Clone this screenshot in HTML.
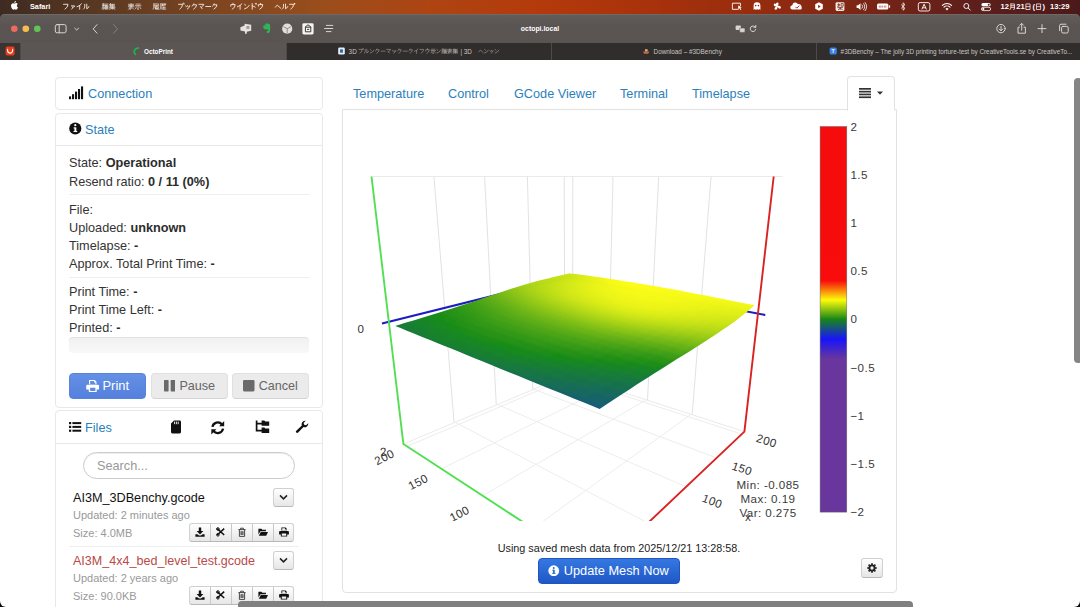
<!DOCTYPE html>
<html lang="en">
<head>
<meta charset="utf-8">
<title>OctoPrint</title>
<style>
*{box-sizing:border-box;margin:0;padding:0}
html,body{width:1080px;height:607px;overflow:hidden;background:#120a08}
body{position:relative;font-family:"Liberation Sans",sans-serif;font-size:12.7px;line-height:18px;color:#333}
.abs{position:absolute}
a,.lnk{color:#2b7fbc;text-decoration:none}
b{font-weight:bold;color:#2c2c2c}
/* ---------- macOS menubar ---------- */
#menubar{position:absolute;left:0;top:0;width:1080px;height:20px;background:linear-gradient(90deg,#3e2b21 0%,#5c3a22 10%,#7d4520 20%,#9a4e1c 30%,#ae4412 40%,#b43a0b 50%,#a8320b 60%,#962c0f 70%,#7a2515 80%,#5e1f1b 90%,#4a1a1a 100%);color:#fff;font-size:7px;line-height:13px;font-weight:bold;white-space:nowrap}
#menubar span{position:absolute;top:0}
/* ---------- safari toolbar ---------- */
#toolbar{position:absolute;left:0;top:13.5px;width:1080px;height:29.5px;background:linear-gradient(#625c5a,#5a5452 40%,#595351);box-shadow:inset 0 0.6px 0 #7d7774;border-top-left-radius:5px;border-top-right-radius:5px}
#tabbar{position:absolute;left:0;top:43px;width:1080px;height:16.6px;background:#302d2c;font-size:6.36px;line-height:17.4px;color:#cbc6c2;white-space:nowrap}
#tabbar .tab{position:absolute;top:0;height:16.6px;border-left:1px solid #4e4a48}
#tabbar .active{background:#5b5553;color:#fff;font-weight:bold}
#tabbar span{position:absolute;top:0}
/* ---------- page ---------- */
#page{position:absolute;left:0;top:59px;width:1080px;height:548px;background:#fff;overflow:hidden;border-radius:0 0 6px 6px}
.panel{position:absolute;border:1px solid #e8e8e8;border-radius:4px;background:#fff}
.phead{position:absolute;left:0;right:0;top:0;height:32px;border-bottom:1px solid #e8e8e8}
.t{position:absolute;white-space:nowrap}
.hr{position:absolute;height:1px;background:#eee}
.btn{position:absolute;border:1px solid #d0d0d0;border-bottom-color:#b9b9b9;border-radius:4px;background:linear-gradient(#ffffff,#e6e6e6);color:#333;text-align:center;white-space:nowrap}
.btn.dis{background:#ebebeb;border-color:#e0e0e0 #e0e0e0 #d4d4d4;color:#666}
.muted{color:#999;font-size:11.2px}
</style>
</head>
<body>
<div id="page"></div><div id="menubar"><svg class="abs" style="left:0;top:0" width="1080" height="13" viewBox="0 0 1080 13"><path fill="#fff" d="M16.2,3.1c-.7.05-1.3.45-1.6.45-.35,0-.85-.43-1.4-.42-.75.01-1.4.43-1.8 1.1-.75 1.3-.2 3.3.55 4.35.36.52.8 1.1 1.35 1.08.54-.02.75-.35 1.4-.35.66 0 .85.35 1.4.34.6-.01.96-.53 1.3-1.05.42-.6.6-1.2.6-1.22-.01-.01-1.15-.45-1.16-1.75-.01-1.1.9-1.62.93-1.65-.5-.75-1.3-.84-1.57-.88zM15.6,2.3c.3-.36.5-.87.44-1.37-.43.02-.95.29-1.26.65-.28.32-.52.83-.45 1.32.48.04.97-.24 1.27-.6z"/><g fill="none" stroke="#fff" stroke-width="0.85" stroke-linecap="round" stroke-linejoin="round" opacity="0.95"><path transform="translate(63.00,3.3) scale(1.0)" d="M0.5,1H5Q5,4 2,5.8"/><path transform="translate(69.75,3.3) scale(1.0)" d="M1.6,2.6H5L4,3.9M3.1,3.6Q3.1,5 1.9,5.9"/><path transform="translate(76.50,3.3) scale(1.0)" d="M5,0.5Q3.5,2.5 0.5,3.5M3.2,2.2V6"/><path transform="translate(83.25,3.3) scale(1.0)" d="M1.5,1V3.5Q1.5,5 0.3,5.8M3.5,0.8V5.5Q5,5 5.8,3.2"/></g><g fill="none" stroke="#fff" stroke-width="0.7" stroke-linecap="round" stroke-linejoin="round" opacity="0.85"><path transform="translate(102.00,3.3) scale(1.0)" d="M0.3,0.8H2.6M0.3,2.2H2.6M1.4,0.2V3M0.4,3.6L0.2,5.8M1.4,3.4V6M2.5,3.6L2.7,5.6M3.2,0.8H6M3.4,2H5.8V6M3.4,2V6M3.4,3.4H5.8M3.4,4.7H5.8M4.6,2V6"/><path transform="translate(109.00,3.3) scale(1.0)" d="M1.5,0.2L0.6,1.6M1.2,1H5.6M1.2,1V3.8M1.2,2H5.4M1.2,2.9H5.4M1.2,3.8H5.8M3.3,1V6M0.3,4.6H6M3.3,4.6L0.6,6M3.3,4.6L5.9,6"/></g><g fill="none" stroke="#fff" stroke-width="0.7" stroke-linecap="round" stroke-linejoin="round" opacity="0.85"><path transform="translate(128.00,3.3) scale(1.0)" d="M0.4,1H5.8M0.8,2.2H5.4M0.3,3.4H6M3.1,0.2V3.4M3,3.4L0.5,6M2,4.4V6M2.2,5.8L3.6,4.8M3.4,3.6L5.8,6"/><path transform="translate(135.00,3.3) scale(1.0)" d="M1,0.8H5.2M0.3,2.4H6M3.1,2.4V6M3.1,5.9L2.4,5.5M1.4,3.6L0.5,5.4M4.8,3.6L5.8,5.4"/></g><g fill="none" stroke="#fff" stroke-width="0.7" stroke-linecap="round" stroke-linejoin="round" opacity="0.85"><path transform="translate(153.00,3.3) scale(1.0)" d="M0.8,0.6H5.6V2H0.8V0.6M0.8,2Q0.8,5 0.2,6M1.8,2.8H5.8M2,3.8H5.4V5H2V3.8M3.6,2.4L2.4,5.2M2.4,5.4L5.8,6M5,5.2L3,6"/><path transform="translate(160.00,3.3) scale(1.0)" d="M0.6,0.6H5.8M0.8,0.6Q0.8,4.5 0.2,6M2,1.4H3.4M2.7,0.9V2.6M1.8,2.2L3.4,2.2M4.2,1.4H5.6M4.9,0.9V2.6M1.8,3.4V5.8H5.8M2.8,4.4H5.4M3.8,3.2V5.8"/></g><g fill="none" stroke="#fff" stroke-width="0.85" stroke-linecap="round" stroke-linejoin="round" opacity="0.95"><path transform="translate(178.00,3.3) scale(1.0)" d="M0.5,1H4.6Q4.6,4 1.8,5.8M5,0L5.4,0.8M5.8,-0.2L6.2,0.6"/><path transform="translate(184.80,3.3) scale(1.0)" d="M1,2.5L1.5,3.5M2.8,2.3L3.2,3.3M5,2.3Q5,4.5 2.5,5.8"/><path transform="translate(191.60,3.3) scale(1.0)" d="M2.2,0.5Q1.8,2 0.4,3M2,1.5H5Q5,4 2,5.8"/><path transform="translate(198.40,3.3) scale(1.0)" d="M0.5,1H5.5Q4.5,3 3,4M2,3.2L3.8,5.5"/><path transform="translate(205.20,3.3) scale(1.0)" d="M0.5,3.2H5.5"/><path transform="translate(212.00,3.3) scale(1.0)" d="M2.2,0.5Q1.8,2 0.4,3M2,1.5H5Q5,4 2,5.8"/></g><g fill="none" stroke="#fff" stroke-width="0.85" stroke-linecap="round" stroke-linejoin="round" opacity="0.95"><path transform="translate(230.00,3.3) scale(1.0)" d="M3,0V1.2M0.8,2.9V1.3H5.2Q5.2,4.5 2.2,5.9"/><path transform="translate(236.90,3.3) scale(1.0)" d="M5,0.5Q3.5,2.5 0.5,3.5M3.2,2.2V6"/><path transform="translate(243.80,3.3) scale(1.0)" d="M0.8,1L2,2M0.8,5.6Q4,5 5.5,2"/><path transform="translate(250.70,3.3) scale(1.0)" d="M1.5,0.3V6M1.5,2.5L4.5,3.8M4.6,0.2L5,1M5.5,0L5.9,0.8"/><path transform="translate(257.60,3.3) scale(1.0)" d="M3,0V1.2M0.8,2.9V1.3H5.2Q5.2,4.5 2.2,5.9"/></g><g fill="none" stroke="#fff" stroke-width="0.85" stroke-linecap="round" stroke-linejoin="round" opacity="0.95"><path transform="translate(275.00,3.3) scale(1.0)" d="M0.3,4L2.2,1.8L5.8,5"/><path transform="translate(282.00,3.3) scale(1.0)" d="M1.5,1V3.5Q1.5,5 0.3,5.8M3.5,0.8V5.5Q5,5 5.8,3.2"/><path transform="translate(289.00,3.3) scale(1.0)" d="M0.5,1H4.6Q4.6,4 1.8,5.8M5.6,0.1a0.5,0.5 0 1,0 0.01,0"/></g><g fill="#fff" stroke="none"><path fill="none" stroke="#fff" stroke-width="0.9" d="M738.5,9.3H732.4V3.2H740.4V6"/><path d="M738.2,5.6l3.6,1.7-1.5.5 1 1.9-.9.4-1-1.9-1.2 1z"/><path d="M753.6,10V5.6a3.4,3.4 0 0 1 6.8,0V10l-1.3-.9-1 .9-1.1-.9-1.1.9-1-.9z"/><circle cx="755.7" cy="5.6" r="0.8" fill="#932b10"/><circle cx="758.4" cy="5.6" r="0.8" fill="#932b10"/><path d="M777,6.3c-1.8-1.4-1.2-3.6.4-3.7 1.4 0 1.6 2 .2 3.4 2.2-.8 3.8.6 3.2 2-.6 1.3-2.4.5-3.3-1.2.3 2.3-1.3 3.6-2.5 2.8-1.2-.9-.2-2.5 1.6-3.1-2.2.2-3.4-1.4-2.6-2.6.8-1.1 2.4-.1 3 2.4z"/><path d="M792.6,9.6a2.2,2.2 0 0 1 -.3-4.4 3,3 0 0 1 5.7-1 2.8,2.8 0 0 1 3.6,2.7 2.3,2.3 0 0 1 -.6,2.7z"/><path fill="none" stroke="#86280f" stroke-width="0.9" d="M795.5,6.9l1.3,1.3 2.4-2.6"/><path d="M819,2.2l3.8,2.1v4.4l-3.8,2.1-3.8-2.1V4.3z"/><path fill="#86280f" d="M818.2,4.8l2.4,1.7-2.4,1.7z"/><rect x="835.6" y="2.2" width="8.8" height="8.8" rx="1.4" fill="#f4ece8"/><path fill="none" stroke="#7a2515" stroke-width="0.75" d="M837.4,4.4H840M838.6,3.4V6.4M837.2,6.4L840,5.6M841,3.6H843.2V6.2M841,3.6V6.2H843.4M837.4,7.6H843M840.2,7V10M838,9.8L840.2,8.4L842.8,9.8"/><path d="M856.6,5.2h1.6l2.3-2v6.8l-2.3-2h-1.6z"/><path fill="none" stroke="#fff" stroke-width="0.8" stroke-linecap="round" d="M862,4.9a2.4,2.4 0 0 1 0,3.4M863.6,3.6a4.3,4.3 0 0 1 0,6M865.1,2.5a6,6 0 0 1 0,8.2"/><rect x="877" y="3.4" width="11.4" height="6.2" rx="1.6"/><rect x="889" y="5.2" width="1.1" height="2.6" rx=".5"/><path fill="none" stroke="#86280f" stroke-width="0.6" d="M879.3,5.6v2M880.8,5.6v2M882.3,5.6v2M884.3,5.6v2M885.8,5.6v2"/><path fill="none" stroke="#fff" stroke-width="0.8" stroke-linejoin="round" d="M901.2,4.6L905,8.4 903.1,10.2V2.8L905,4.6 901.2,8.4"/><rect x="918.3" y="2.6" width="11.6" height="8.4" rx="1.8" fill="none" stroke="#fff" stroke-width="0.9"/><path fill="none" stroke="#fff" stroke-width="0.9" d="M921.8,9.4L924.1,4.2 926.4,9.4M922.6,7.8H925.6"/><path fill="none" stroke="#fff" stroke-width="1.1" stroke-linecap="round" d="M942.4,5.4a6.6,6.6 0 0 1 9.2,0M944,7.2a4.3,4.3 0 0 1 6,0"/><path d="M947,10.4l-1.5-1.6a2.1,2.1 0 0 1 3,0z"/><circle cx="966.3" cy="6" r="2.5" fill="none" stroke="#fff" stroke-width="0.9"/><path stroke="#fff" stroke-width="1" stroke-linecap="round" d="M968.2,8l2,2.1"/><rect x="981.4" y="3" width="9.2" height="3.3" rx="1.65"/><rect x="981.4" y="7.3" width="9.2" height="3.3" rx="1.65" fill="none" stroke="#fff" stroke-width="0.8"/><circle cx="988.7" cy="4.65" r="1" fill="#5e1f1b"/><circle cx="983.3" cy="8.95" r="1.1"/></g><g fill="none" stroke="#fff" stroke-width="0.75" stroke-linecap="round" stroke-linejoin="round" opacity="0.95"><path transform="translate(1009.40,3.4) scale(1.05)" d="M1.4,0.5H4.8V5.4Q4.8,6 4,5.8M1.4,0.5V4Q1.4,5.4 0.5,6M1.4,2.2H4.8M1.4,3.8H4.8"/></g><g fill="none" stroke="#fff" stroke-width="0.75" stroke-linecap="round" stroke-linejoin="round" opacity="0.95"><path transform="translate(1025.00,3.4) scale(1.05)" d="M1.2,0.5H4.8V5.8H1.2ZM1.2,3.1H4.8"/></g><g fill="none" stroke="#fff" stroke-width="0.75" stroke-linecap="round" stroke-linejoin="round" opacity="0.95"><path transform="translate(1035.60,3.4) scale(1.05)" d="M1.2,0.5H4.8V5.8H1.2ZM1.2,3.1H4.8"/></g></svg><span style="left:30px;font-size:7.3px">Safari</span><span style="left:1000.6px;font-size:7.6px">12</span><span style="left:1016.2px;font-size:7.6px">21</span><span style="left:1032.6px;font-size:7.6px">(</span><span style="left:1042.6px;font-size:7.6px">)</span><span style="left:1050px;font-size:7.6px">13:29</span></div><div id="toolbar"></div><svg class="abs" style="left:0;top:13px" width="1080" height="30" viewBox="0 13 1080 30"><circle cx="14.3" cy="28.8" r="3.3" fill="#ec6a5e"/><circle cx="25.8" cy="28.8" r="3.3" fill="#f4bf4f"/><circle cx="37.3" cy="28.8" r="3.3" fill="#61c554"/><g fill="none" stroke="#d8d4d1" stroke-width="1" stroke-linecap="round" stroke-linejoin="round"><rect x="55.3" y="24.6" width="10.8" height="8.2" rx="1.8"/><path d="M59.2,24.6V32.8"/></g><path fill="none" stroke="#d8d4d1" stroke-width="1" stroke-linecap="round" stroke-linejoin="round" stroke-width="1.1" d="M74.8,28.2L76.7,30 78.6,28.2"/><path fill="none" stroke="#d8d4d1" stroke-width="1" stroke-linecap="round" stroke-linejoin="round" stroke-width="1.2" d="M97,24.6L93.2,28.9 97,33.2"/><path fill="none" stroke="#d8d4d1" stroke-width="1" stroke-linecap="round" stroke-linejoin="round" stroke-width="1.2" opacity="0.35" d="M113.6,24.6L117.4,28.9 113.6,33.2"/><path fill="#e6e2df" d="M240.4,27.2l4.2-1.6V23.8l6.6,1v6l-4.4.9v2h-1.8V31.4l-4.6-.9z"/><path fill="#5b5553" d="M246.4,26h3v3h-3z" opacity=".5"/><path fill="#2fb457" d="M263.6,25.6l1.9-1.9c1.2-.3 3.6-.2 4.4.9.5 1.3.6 5.4-.1 7.3-.5 1.3-2.9 1.5-3.2.4-.2-.9.7-1.5 1.5-1.2v-1.6c-2.2.3-4.9-.3-4.9-2.2 0-.7.1-1.2.4-1.7z"/><path fill="#5b5553" d="M265.6,24v1.7h-1.7z" opacity=".7"/><circle cx="287.2" cy="28.7" r="5.1" fill="#e2dedb"/><path fill="none" stroke="#8a8581" stroke-width="0.9" d="M283.4,26.6l3.8,2.1 3.8-2.1M287.2,28.7v4.4"/><rect x="302.4" y="23.2" width="11.2" height="11.2" rx="1.4" fill="#f6f5f4"/><path fill="none" stroke="#3e3a38" stroke-width="1" d="M305.4,27.2h5.4v4.6h-5.4zM305,27.2l3-2.4 3.2,2.4M307,29.4h2.2"/><path fill="none" stroke="#d8d4d1" stroke-width="1" stroke-linecap="round" stroke-linejoin="round" stroke-width="0.9" d="M326.4,25.4h6.4M324.6,28.5h8.2M326.4,31.6h4.6"/><rect x="735.6" y="25.6" width="5.4" height="4.4" rx="1" fill="#d8d4d1"/><rect x="739.6" y="28" width="5.4" height="4.4" rx="1" fill="#d8d4d1" stroke="#5b5553" stroke-width="0.6"/><path fill="none" stroke="#d8d4d1" stroke-width="1" stroke-linecap="round" stroke-linejoin="round" stroke-width="0.9" d="M755.4,27.2a2.8,2.8 0 1 0 .4,2.2M755.8,25.4v1.9h-1.9"/><g fill="none" stroke="#d8d4d1" stroke-width="1" stroke-linecap="round" stroke-linejoin="round" stroke-width="0.95"><circle cx="1001" cy="28.6" r="4.2"/><path d="M1001,26.4v4.2M999.2,29l1.8,1.8 1.8-1.8"/></g><g fill="none" stroke="#d8d4d1" stroke-width="1" stroke-linecap="round" stroke-linejoin="round" stroke-width="0.95"><path d="M1019.4,27.2h-1.4v6h7.4v-6h-1.4M1021.7,30.2V23.6M1019.9,25.2l1.8-1.8 1.8,1.8"/></g><path fill="none" stroke="#d8d4d1" stroke-width="1" stroke-linecap="round" stroke-linejoin="round" stroke-width="1.1" d="M1042,24.6v8M1038,28.6h8"/><g fill="none" stroke="#d8d4d1" stroke-width="1" stroke-linecap="round" stroke-linejoin="round" stroke-width="0.95"><rect x="1061.6" y="26.4" width="6.6" height="6.6" rx="1.4"/><path d="M1059.6,30.6v-5a1.4,1.4 0 0 1 1.4-1.4h5"/></g></svg><div class="abs" style="left:500px;top:13px;width:80px;height:30px;line-height:31px;text-align:center;color:#fff;font-weight:bold;font-size:6.9px">octopi.local</div><div id="tabbar"><div class="tab" style="left:0;width:20px;background:#393331;border-left:none"></div><div class="tab active" style="left:20px;width:266px"></div><div class="tab" style="left:286px;width:265px"></div><div class="tab" style="left:551px;width:265px"></div><div class="tab" style="left:816px;width:264px"></div><svg class="abs" style="left:0;top:0.3px" width="1080" height="16" viewBox="0 43 1080 16"><rect x="5.6" y="46.4" width="9" height="9" rx="1.6" fill="#e63d1c"/><path fill="none" stroke="#fff" stroke-width="1.1" stroke-linecap="round" stroke-linejoin="round" d="M7.6,49.2v1.4a2.5,2.5 0 0 0 5,0V49.2"/><path fill="none" stroke="#22b24c" stroke-width="1.7" stroke-linecap="round" d="M138.4,48.2a3.6,3.6 0 0 0 -3,6.2"/><rect x="338.2" y="47.6" width="6.6" height="6.8" rx="1.2" fill="#e9eef5"/><rect x="340" y="49.2" width="3" height="3.6" rx=".6" fill="#2c6fb7"/><path fill="#c96a3c" d="M643,51.6h6.4l-1.2,2.2h-4.2z"/><path fill="#d9b08c" d="M645,49.2h2.6v2.2H645z"/><rect x="829.6" y="47.4" width="7.2" height="7.2" rx="1.6" fill="#3b82e6"/><path fill="none" stroke="#fff" stroke-width="0.8" d="M831.6,49.6h3.2M833.2,49.6v3.4"/><g fill="none" stroke="#bdb7b3" stroke-width="0.75" stroke-linecap="round" opacity="0.85"><path transform="translate(358.50,48.6) scale(0.8)" d="M0.5,1H4.6Q4.6,4 1.8,5.8M5.6,0.1a0.5,0.5 0 1,0 0.01,0"/><path transform="translate(364.05,48.6) scale(0.8)" d="M1.5,1V3.5Q1.5,5 0.3,5.8M3.5,0.8V5.5Q5,5 5.8,3.2"/><path transform="translate(369.60,48.6) scale(0.8)" d="M0.8,1L2,2M0.8,5.6Q4,5 5.5,2"/><path transform="translate(375.15,48.6) scale(0.8)" d="M2.2,0.5Q1.8,2 0.4,3M2,1.5H5Q5,4 2,5.8"/><path transform="translate(380.70,48.6) scale(0.8)" d="M0.5,3.2H5.5"/><path transform="translate(386.25,48.6) scale(0.8)" d="M0.5,1H5.5Q4.5,3 3,4M2,3.2L3.8,5.5"/><path transform="translate(391.80,48.6) scale(0.8)" d="M1,2.5L1.5,3.5M2.8,2.3L3.2,3.3M5,2.3Q5,4.5 2.5,5.8"/><path transform="translate(397.35,48.6) scale(0.8)" d="M2.2,0.5Q1.8,2 0.4,3M2,1.5H5Q5,4 2,5.8"/><path transform="translate(402.90,48.6) scale(0.8)" d="M0.5,3.2H5.5"/><path transform="translate(408.45,48.6) scale(0.8)" d="M2.2,0.5Q1.8,2 0.4,3M2,1.5H5Q5,4 2,5.8"/><path transform="translate(414.00,48.6) scale(0.8)" d="M5,0.5Q3.5,2.5 0.5,3.5M3.2,2.2V6"/><path transform="translate(419.55,48.6) scale(0.8)" d="M0.5,1H5Q5,4 2,5.8"/><path transform="translate(425.10,48.6) scale(0.8)" d="M3,0V1.2M0.8,2.9V1.3H5.2Q5.2,4.5 2.2,5.9"/><path transform="translate(430.65,48.6) scale(0.8)" d="M1,0.8H5.2M0.3,2.4H6M3.1,2.4V6M3.1,5.9L2.4,5.5M1.4,3.6L0.5,5.4M4.8,3.6L5.8,5.4"/><path transform="translate(436.20,48.6) scale(0.8)" d="M0.8,1L2,2M0.8,5.6Q4,5 5.5,2"/><path transform="translate(441.75,48.6) scale(0.8)" d="M0.3,0.8H2.6M0.3,2.2H2.6M1.4,0.2V3M0.4,3.6L0.2,5.8M1.4,3.4V6M2.5,3.6L2.7,5.6M3.2,0.8H6M3.4,2H5.8V6M3.4,2V6M3.4,3.4H5.8M3.4,4.7H5.8M4.6,2V6"/><path transform="translate(447.30,48.6) scale(0.8)" d="M0.4,1H5.8M0.8,2.2H5.4M0.3,3.4H6M3.1,0.2V3.4M3,3.4L0.5,6M2,4.4V6M2.2,5.8L3.6,4.8M3.4,3.6L5.8,6"/><path transform="translate(452.85,48.6) scale(0.8)" d="M1.5,0.2L0.6,1.6M1.2,1H5.6M1.2,1V3.8M1.2,2H5.4M1.2,2.9H5.4M1.2,3.8H5.8M3.3,1V6M0.3,4.6H6M3.3,4.6L0.6,6M3.3,4.6L5.9,6"/><path transform="translate(478.60,48.6) scale(0.8)" d="M0.3,4L2.2,1.8L5.8,5"/><path transform="translate(483.90,48.6) scale(0.8)" d="M0.8,1L2,2M0.8,5.6Q4,5 5.5,2"/><path transform="translate(489.20,48.6) scale(0.8)" d="M1,2.5L1.5,3.5M2.8,2.3L3.2,3.3M5,2.3Q5,4.5 2.5,5.8"/><path transform="translate(494.50,48.6) scale(0.8)" d="M0.8,1L2,2M0.8,5.6Q4,5 5.5,2"/></g></svg><span style="left:144px;color:#fff;font-weight:bold;font-size:6.35px">OctoPrint</span><span style="left:348.6px">3D</span><span style="left:460.4px">| 3D</span><span style="left:653.6px">Download – #3DBenchy</span><span style="left:840.6px">#3DBenchy – The jolly 3D printing torture-test by CreativeTools.se by CreativeTo...</span></div><div class="panel" style="left:55px;top:77px;width:268px;height:33px"></div><svg class="abs" style="left:68px;top:86px" width="17" height="14" viewBox="0 0 17 14"><g fill="#111"><rect x="1" y="10.4" width="2.1" height="2.8"/><rect x="4" y="8.2" width="2.1" height="5"/><rect x="7" y="5.6" width="2.1" height="7.6"/><rect x="10" y="3" width="2.1" height="10.2"/><rect x="13" y="0.4" width="2.1" height="12.8"/></g></svg><div class="t" style="left:88px;top:85px;"><span class="lnk">Connection</span></div><div class="panel" style="left:55px;top:113px;width:268px;height:294.5px"><div class="phead"></div></div><svg class="abs" style="left:67.6px;top:121.4px" width="15.2" height="15.2" viewBox="0 0 14 14"><circle cx="6.7" cy="6.9" r="5.6" fill="#111"/><rect x="5.9" y="5.9" width="1.8" height="4.1" fill="#fff"/><rect x="5.2" y="5.9" width="1.6" height="1" fill="#fff"/><rect x="5.1" y="9.2" width="3.4" height="1" fill="#fff"/><circle cx="6.7" cy="3.9" r="1.05" fill="#fff"/></svg><div class="t" style="left:85px;top:121px;"><span class="lnk">State</span></div><div class="t" style="left:69px;top:154px;">State: <b>Operational</b></div><div class="t" style="left:69px;top:173px;">Resend ratio: <b>0 / 11 (0%)</b></div><div class="hr" style="left:69px;top:194px;width:240px"></div><div class="t" style="left:69px;top:201px;">File:</div><div class="t" style="left:69px;top:219px;">Uploaded: <b>unknown</b></div><div class="t" style="left:69px;top:237px;">Timelapse: <b>-</b></div><div class="t" style="left:69px;top:255px;">Approx. Total Print Time: <b>-</b></div><div class="hr" style="left:69px;top:276.5px;width:240px"></div><div class="t" style="left:69px;top:283px;">Print Time: <b>-</b></div><div class="t" style="left:69px;top:301px;">Print Time Left: <b>-</b></div><div class="t" style="left:69px;top:319px;">Printed: <b>-</b></div><div class="abs" style="left:69px;top:337px;width:240px;height:16px;border-radius:4px;background:linear-gradient(#f1f1f1,#f8f8f8);box-shadow:inset 0 1px 1px rgba(0,0,0,.07)"></div><div class="btn" style="left:69px;top:373px;width:77px;height:26px;line-height:24px;background:linear-gradient(#6490e6,#5580dc);border-color:#5783dc;color:#fff;font-size:12.9px"><svg style="vertical-align:-1.5px;margin-right:3px" width="13.5" height="12" viewBox="0 0 12 11"><path fill="#fff" d="M2.6,0h5.2l1.6,1.6V4H2.6zM1.2,4.4h9.6a1.2,1.2 0 0 1 1.2,1.2V8.6H9.6V11H2.4V8.6H0V5.6a1.2,1.2 0 0 1 1.2-1.2z"/><path fill="#5d8de0" d="M3.6,1h3.6v1.4h1.2V4H3.6zM3.6,7.2h4.8V10H3.6z"/></svg>Print</div><div class="btn dis" style="left:151px;top:373px;width:77px;height:26px;line-height:24px;font-size:12.6px"><svg style="vertical-align:-1.5px;margin-right:4px" width="11.5" height="11.5" viewBox="0 0 10 10"><rect x="0" y="0" width="4" height="10" rx=".6" fill="#6a6a6a"/><rect x="5.8" y="0" width="4" height="10" rx=".6" fill="#6a6a6a"/></svg>Pause</div><div class="btn dis" style="left:232px;top:373px;width:77px;height:26px;line-height:24px;font-size:12.6px"><svg style="vertical-align:-1.5px;margin-right:4px" width="11.5" height="11.5" viewBox="0 0 10 10"><rect x="0" y="0" width="10" height="10" rx="1" fill="#6a6a6a"/></svg>Cancel</div><div class="panel" style="left:55px;top:410px;width:268px;height:230px"><div class="phead" style="height:33px"></div></div><svg class="abs" style="left:68px;top:421px" width="14" height="12" viewBox="0 0 14 12"><g fill="#111"><rect x="1" y="1" width="2.2" height="2.2"/><rect x="4.4" y="1.1" width="8.8" height="2"/><rect x="1" y="4.8" width="2.2" height="2.2"/><rect x="4.4" y="4.9" width="8.8" height="2"/><rect x="1" y="8.6" width="2.2" height="2.2"/><rect x="4.4" y="8.7" width="8.8" height="2"/></g></svg><div class="t" style="left:85px;top:419px;"><span class="lnk">Files</span></div><svg class="abs" style="left:170px;top:420px" width="12" height="14" viewBox="0 0 12 14"><path fill="#111" d="M4,0.6h5.6a1.4,1.4 0 0 1 1.4,1.4v10a1.4,1.4 0 0 1 -1.4,1.4H2.4a1.4,1.4 0 0 1 -1.4-1.4V3.6z"/><path stroke="#fff" stroke-width="0.9" d="M4.6,1.6v2.6M6.4,1.6v2.6M8.2,1.6v2.6"/></svg><svg class="abs" style="left:209.5px;top:419.5px" width="15.5" height="15.5" viewBox="0 0 14 14"><g fill="none" stroke="#111" stroke-width="2.1"><path d="M2.2,6.2a4.9,4.9 0 0 1 8.6-2.2"/><path d="M11.8,7.8a4.9,4.9 0 0 1 -8.6,2.2"/></g><path fill="#111" d="M12.8,1v4.6H8.2zM1.2,13V8.4h4.6z"/></svg><svg class="abs" style="left:255px;top:420px" width="15" height="14" viewBox="0 0 15 14"><path fill="none" stroke="#111" stroke-width="1.7" d="M1.6,0.6V10.6H7M1.6,3.6H7"/><path fill="#111" d="M6.6,0.6h2.8l.8.9h4v4.3H6.6zM6.6,7.6h2.8l.8.9h4v4.4H6.6z"/></svg><svg class="abs" style="left:295px;top:420px" width="14" height="14" viewBox="0 0 14 14"><path fill="#111" d="M13.2,3.2a3.6,3.6 0 0 1 -4.7,3.9L3.2,12.6a1.3,1.3 0 0 1 -1.9-1.9L6.8,5.4A3.6,3.6 0 0 1 10.7,.7L8.6,2.9l.6,1.8 1.8.6z"/></svg><div class="abs" style="left:83px;top:452px;width:212px;height:27px;border:1px solid #ccc;border-radius:14px;box-shadow:inset 0 1px 1px rgba(0,0,0,.075)"></div><div class="t" style="left:97px;top:457px;color:#999">Search...</div><div class="t" style="left:73px;top:488.5px;color:#111;font-size:12.65px">AI3M_3DBenchy.gcode</div><div class="btn" style="left:273px;top:487.5px;width:21px;height:19px;border-radius:3px"></div><svg class="abs" style="left:279px;top:493.5px" width="9" height="7" viewBox="0 0 9 7"><path fill="none" stroke="#222" stroke-width="1.5" d="M1,1.4L4.5,4.9 8,1.4"/></svg><div class="t" style="left:73px;top:505.5px;color:#999;font-size:11px">Updated: 2 minutes ago</div><div class="t" style="left:73px;top:523.5px;color:#999;font-size:11px">Size: 4.0MB</div><div class="btn" style="left:189px;top:522.5px;width:105px;height:19px;border-radius:3px"></div><div class="abs" style="left:210px;top:523.5px;width:1px;height:17px;background:#c8c8c8"></div><div class="abs" style="left:231px;top:523.5px;width:1px;height:17px;background:#c8c8c8"></div><div class="abs" style="left:252px;top:523.5px;width:1px;height:17px;background:#c8c8c8"></div><div class="abs" style="left:273px;top:523.5px;width:1px;height:17px;background:#c8c8c8"></div><svg class="abs" style="left:194.5px;top:527.0px" width="10" height="10" viewBox="0 0 10 10"><path fill="#111" d="M3.8,0.5h2.4v3.6h2.2L5,7.6 1.6,4.1h2.2zM0.4,7.2h2l1.6,1.4h2l1.6-1.4h2v2.6H0.4z"/></svg><svg class="abs" style="left:215.5px;top:527.0px" width="10" height="10" viewBox="0 0 10 10"><path fill="none" stroke="#111" stroke-width="1.5" d="M1.2,1.6L8.2,8M8.2,1.6L1.2,8"/><circle cx="1.9" cy="2" r="1.3" fill="none" stroke="#111" stroke-width="1"/><circle cx="1.9" cy="7.8" r="1.3" fill="none" stroke="#111" stroke-width="1"/></svg><svg class="abs" style="left:236.5px;top:527.0px" width="10" height="10" viewBox="0 0 10 10"><path fill="none" stroke="#333" stroke-width="0.9" d="M1.4,2.6h7.2M3.6,2.4V1.2h2.8v1.2M2.4,2.8V9.4h5.2V2.8M4,4.2v3.8M5,4.2v3.8M6,4.2v3.8"/></svg><svg class="abs" style="left:257.5px;top:527.0px" width="10" height="10" viewBox="0 0 10 10"><path fill="#111" d="M0.4,1.8h3l.9.9h3.6v1.5H2.4L0.4,7.6zM2.8,5h7.2L8.2,8.8H0.8z"/></svg><svg class="abs" style="left:278.5px;top:527.0px" width="10" height="10" viewBox="0 0 10 10"><path fill="#111" d="M2.4,0.4h4.2l1,1V3.6H2.4zM1,3.9h8a.9,.9 0 0 1 .9.9V7.6H8.2V9.6H1.8V7.6H0.1V4.8a.9,.9 0 0 1 .9-.9z"/><path fill="#f2f2f2" d="M3.2,1.2h2.8v1h.8v1.4H3.2zM2.8,6.4h4.4V8.8H2.8z"/></svg><div class="hr" style="left:69px;top:546px;width:230px"></div><div class="t" style="left:73px;top:552px;color:#b94a48;font-size:12.55px">AI3M_4x4_bed_level_test.gcode</div><div class="btn" style="left:273px;top:551px;width:21px;height:19px;border-radius:3px"></div><svg class="abs" style="left:279px;top:557px" width="9" height="7" viewBox="0 0 9 7"><path fill="none" stroke="#222" stroke-width="1.5" d="M1,1.4L4.5,4.9 8,1.4"/></svg><div class="t" style="left:73px;top:569px;color:#999;font-size:11px">Updated: 2 years ago</div><div class="t" style="left:73px;top:587px;color:#999;font-size:11px">Size: 90.0KB</div><div class="btn" style="left:189px;top:585.5px;width:105px;height:19px;border-radius:3px"></div><div class="abs" style="left:210px;top:586.5px;width:1px;height:17px;background:#c8c8c8"></div><div class="abs" style="left:231px;top:586.5px;width:1px;height:17px;background:#c8c8c8"></div><div class="abs" style="left:252px;top:586.5px;width:1px;height:17px;background:#c8c8c8"></div><div class="abs" style="left:273px;top:586.5px;width:1px;height:17px;background:#c8c8c8"></div><svg class="abs" style="left:194.5px;top:590.0px" width="10" height="10" viewBox="0 0 10 10"><path fill="#111" d="M3.8,0.5h2.4v3.6h2.2L5,7.6 1.6,4.1h2.2zM0.4,7.2h2l1.6,1.4h2l1.6-1.4h2v2.6H0.4z"/></svg><svg class="abs" style="left:215.5px;top:590.0px" width="10" height="10" viewBox="0 0 10 10"><path fill="none" stroke="#111" stroke-width="1.5" d="M1.2,1.6L8.2,8M8.2,1.6L1.2,8"/><circle cx="1.9" cy="2" r="1.3" fill="none" stroke="#111" stroke-width="1"/><circle cx="1.9" cy="7.8" r="1.3" fill="none" stroke="#111" stroke-width="1"/></svg><svg class="abs" style="left:236.5px;top:590.0px" width="10" height="10" viewBox="0 0 10 10"><path fill="none" stroke="#333" stroke-width="0.9" d="M1.4,2.6h7.2M3.6,2.4V1.2h2.8v1.2M2.4,2.8V9.4h5.2V2.8M4,4.2v3.8M5,4.2v3.8M6,4.2v3.8"/></svg><svg class="abs" style="left:257.5px;top:590.0px" width="10" height="10" viewBox="0 0 10 10"><path fill="#111" d="M0.4,1.8h3l.9.9h3.6v1.5H2.4L0.4,7.6zM2.8,5h7.2L8.2,8.8H0.8z"/></svg><svg class="abs" style="left:278.5px;top:590.0px" width="10" height="10" viewBox="0 0 10 10"><path fill="#111" d="M2.4,0.4h4.2l1,1V3.6H2.4zM1,3.9h8a.9,.9 0 0 1 .9.9V7.6H8.2V9.6H1.8V7.6H0.1V4.8a.9,.9 0 0 1 .9-.9z"/><path fill="#f2f2f2" d="M3.2,1.2h2.8v1h.8v1.4H3.2zM2.8,6.4h4.4V8.8H2.8z"/></svg><div class="abs" style="left:342px;top:109px;width:555px;height:484px;border:1px solid #e2e2e2;border-radius:0 0 4px 4px"></div><div class="t" style="left:353px;top:85px;"><span class="lnk">Temperature</span></div><div class="t" style="left:448px;top:85px;"><span class="lnk">Control</span></div><div class="t" style="left:514px;top:85px;"><span class="lnk">GCode Viewer</span></div><div class="t" style="left:620px;top:85px;"><span class="lnk">Terminal</span></div><div class="t" style="left:692px;top:85px;"><span class="lnk">Timelapse</span></div><div class="abs" style="left:847px;top:76px;width:48px;height:35px;border:1px solid #e2e2e2;border-bottom:1px solid #fff;border-radius:4px 4px 0 0;background:#fff"></div><svg class="abs" style="left:858px;top:87px" width="28" height="12" viewBox="0 0 28 12"><g fill="#333"><rect x="1" y="1" width="12" height="1.7"/><rect x="1" y="3.8" width="12" height="1.7"/><rect x="1" y="6.6" width="12" height="1.7"/><rect x="1" y="9.4" width="12" height="1.7"/><path d="M19,4.4h6l-3,3.4z"/></g></svg><div class="t" style="left:419px;top:540px;width:400px;text-align:center;font-size:10.8px;line-height:16px;color:#222">Using saved mesh data from 2025/12/21 13:28:58.</div><div class="btn" style="left:537.5px;top:557.5px;width:142px;height:26.5px;line-height:24.5px;background:linear-gradient(#3578e2,#1f58c6);border-color:#1f55bd;color:#fff;font-size:12.75px;border-radius:4px"><svg style="vertical-align:-1.5px;margin-right:4px" width="11.5" height="11.5" viewBox="0 0 14 14"><circle cx="7" cy="7" r="6.6" fill="#fff"/><rect x="6" y="5.8" width="2.2" height="4.6" fill="#2a6ed8"/><rect x="5.1" y="5.8" width="2" height="1.1" fill="#2a6ed8"/><rect x="5" y="9.6" width="4.2" height="1.1" fill="#2a6ed8"/><circle cx="7" cy="3.6" r="1.25" fill="#2a6ed8"/></svg>Update Mesh Now</div><div class="btn" style="left:861px;top:558px;width:22px;height:20px;border-radius:3px"></div><svg class="abs" style="left:867px;top:563px" width="10" height="10" viewBox="0 0 10 10"><circle cx="5" cy="5" r="2.6" fill="none" stroke="#222" stroke-width="1.9"/><g stroke="#222" stroke-width="1.7"><path d="M5,0.2V2M5,8V9.8M0.2,5H2M8,5H9.8M1.6,1.6L2.9,2.9M7.1,7.1L8.4,8.4M8.4,1.6L7.1,2.9M2.9,7.1L1.6,8.4"/></g></svg><div class="abs" style="left:238px;top:601px;width:675px;height:10px;border-radius:4px;background:#808080"></div><div class="abs" style="left:1074px;top:77.5px;width:8px;height:285px;border-radius:4px;background:#858585"></div><svg class="abs" style="left:343px;top:110px" width="553" height="411" viewBox="343 110 553 410.6"><path d="M454.1,422.5L433.9,176.3M692.2,414.5L711.1,176.3M496.3,404.8L484.6,176.3M647.5,400.1L658.7,176.3M532.8,389.5L527.4,176.3M607.9,387.3L613.0,176.3M564.9,376.0L564.2,176.3M572.5,375.8L572.8,176.3" fill="none" stroke="#d6d6d6" stroke-width="0.7"/><path d="M371.5,176.3L568.3,176.3M568.3,176.3L782.5,176.3M403.4,443.8L568.5,374.5M568.5,374.5L744.4,431.4" fill="none" stroke="#e4e4e4" stroke-width="0.8"/><path d="M648.0,522.8L455.1,422.1M533.0,528.3L691.1,414.1M686.1,486.6L497.5,404.3M482.7,495.5L646.2,399.6M716.6,457.7L533.7,389.1M441.5,468.7L607.0,387.0M741.7,434.0L565.0,376.0M407.1,446.2L572.4,375.8" fill="none" stroke="#ededed" stroke-width="1"/><path d="M382,323.2L568.3,276.9L765.3,314.8" fill="none" stroke="#1c1cc4" stroke-width="2.1"/><defs><clipPath id="sc"><polygon points="599.6,408.8 610.1,401.8 620.0,395.3 629.4,389.2 638.3,383.4 646.8,378.0 654.9,372.8 662.6,368.0 670.0,363.3 677.0,358.9 683.7,354.7 690.2,350.7 696.4,346.8 702.3,343.0 708.0,339.4 713.5,335.8 718.7,332.4 723.8,328.9 728.7,325.5 733.4,322.2 737.9,318.8 742.3,315.4 746.5,312.0 750.6,308.6 754.5,305.1 744.2,303.0 734.2,301.0 724.5,299.0 715.0,297.2 705.9,295.4 696.9,293.7 688.2,292.0 679.8,290.4 671.5,288.9 663.5,287.5 655.7,286.1 648.1,284.8 640.6,283.5 633.4,282.3 626.3,281.2 619.4,280.1 612.7,279.0 606.1,278.0 599.6,277.1 593.4,276.2 587.2,275.3 581.2,274.5 575.3,273.7 569.6,273.0 564.4,274.2 559.1,275.5 553.6,276.8 548.0,278.2 542.3,279.6 536.4,281.1 530.3,282.8 524.1,284.6 517.7,286.5 511.2,288.6 504.4,290.8 497.5,293.2 490.3,295.6 482.9,298.1 475.3,300.7 467.5,303.3 459.5,305.9 451.2,308.6 442.6,311.3 433.7,314.0 424.6,316.8 415.1,319.7 405.3,322.6 395.2,325.7 400.6,327.9 406.2,330.2 412.0,332.5 418.0,335.0 424.2,337.5 430.6,340.1 437.2,342.8 444.0,345.5 451.1,348.4 458.5,351.4 466.1,354.5 474.0,357.7 482.3,361.1 490.8,364.6 499.7,368.2 509.0,372.0 518.6,375.9 528.7,380.0 539.2,384.3 550.2,388.7 561.7,393.4 573.7,398.3 586.4,403.4"/></clipPath><filter id="sb" x="-5%" y="-5%" width="110%" height="110%"><feGaussianBlur stdDeviation="1.6"/></filter></defs><g clip-path="url(#sc)"><g filter="url(#sb)" stroke-width="0.9" stroke-linejoin="round"><polygon points="604.8,432.2 616.7,423.4 601.4,417.0 589.4,425.4" fill="#185a7a" stroke="#185a7a"/><polygon points="589.4,425.4 601.4,417.0 587.0,411.0 574.9,418.9" fill="#185a7a" stroke="#185a7a"/><polygon points="574.9,418.9 587.0,411.0 573.3,405.2 561.1,412.8" fill="#185d74" stroke="#185d74"/><polygon points="561.1,412.8 573.3,405.2 560.3,399.8 548.1,407.0" fill="#18616d" stroke="#18616d"/><polygon points="548.1,407.0 560.3,399.8 547.9,394.6 535.6,401.4" fill="#186466" stroke="#186466"/><polygon points="535.6,401.4 547.9,394.6 536.2,389.6 523.8,396.2" fill="#18685f" stroke="#18685f"/><polygon points="523.8,396.2 536.2,389.6 524.9,384.9 512.6,391.2" fill="#186b58" stroke="#186b58"/><polygon points="512.6,391.2 524.9,384.9 514.2,380.4 501.9,386.4" fill="#186e52" stroke="#186e52"/><polygon points="501.9,386.4 514.2,380.4 503.9,376.1 491.6,381.8" fill="#18714d" stroke="#18714d"/><polygon points="491.6,381.8 503.9,376.1 494.1,372.0 481.8,377.5" fill="#187348" stroke="#187348"/><polygon points="481.8,377.5 494.1,372.0 484.7,368.0 472.5,373.3" fill="#187544" stroke="#187544"/><polygon points="472.5,373.3 484.7,368.0 475.7,364.2 463.5,369.3" fill="#187741" stroke="#187741"/><polygon points="463.5,369.3 475.7,364.2 467.1,360.6 454.9,365.5" fill="#18783e" stroke="#18783e"/><polygon points="454.9,365.5 467.1,360.6 458.8,357.1 446.7,361.8" fill="#187a3b" stroke="#187a3b"/><polygon points="446.7,361.8 458.8,357.1 450.8,353.7 438.8,358.3" fill="#187b39" stroke="#187b39"/><polygon points="438.8,358.3 450.8,353.7 443.1,350.5 431.2,354.9" fill="#187b37" stroke="#187b37"/><polygon points="431.2,354.9 443.1,350.5 435.7,347.4 423.9,351.7" fill="#187c36" stroke="#187c36"/><polygon points="423.9,351.7 435.7,347.4 428.6,344.4 416.8,348.6" fill="#187c35" stroke="#187c35"/><polygon points="416.8,348.6 428.6,344.4 421.8,341.6 410.0,345.5" fill="#187d35" stroke="#187d35"/><polygon points="410.0,345.5 421.8,341.6 415.2,338.8 403.5,342.6" fill="#187c36" stroke="#187c36"/><polygon points="403.5,342.6 415.2,338.8 408.8,336.1 397.2,339.8" fill="#187c37" stroke="#187c37"/><polygon points="397.2,339.8 408.8,336.1 402.6,333.5 391.1,337.1" fill="#187b38" stroke="#187b38"/><polygon points="391.1,337.1 402.6,333.5 396.7,331.0 385.3,334.5" fill="#187b39" stroke="#187b39"/><polygon points="385.3,334.5 396.7,331.0 390.9,328.6 379.6,332.0" fill="#187a3a" stroke="#187a3a"/><polygon points="379.6,332.0 390.9,328.6 385.4,326.2 374.1,329.5" fill="#187a3a" stroke="#187a3a"/><polygon points="374.1,329.5 385.4,326.2 380.0,324.0 368.8,327.2" fill="#187a3a" stroke="#187a3a"/><polygon points="616.7,423.4 627.8,415.2 612.7,409.2 601.4,417.0" fill="#185a7a" stroke="#185a7a"/><polygon points="601.4,417.0 612.7,409.2 598.4,403.5 587.0,411.0" fill="#185a7a" stroke="#185a7a"/><polygon points="587.0,411.0 598.4,403.5 584.8,398.1 573.3,405.2" fill="#185d74" stroke="#185d74"/><polygon points="573.3,405.2 584.8,398.1 571.9,393.0 560.3,399.8" fill="#18616d" stroke="#18616d"/><polygon points="560.3,399.8 571.9,393.0 559.6,388.1 547.9,394.6" fill="#186466" stroke="#186466"/><polygon points="547.9,394.6 559.6,388.1 547.8,383.4 536.2,389.6" fill="#18685f" stroke="#18685f"/><polygon points="536.2,389.6 547.8,383.4 536.6,378.9 524.9,384.9" fill="#186b58" stroke="#186b58"/><polygon points="524.9,384.9 536.6,378.9 525.9,374.7 514.2,380.4" fill="#186e52" stroke="#186e52"/><polygon points="514.2,380.4 525.9,374.7 515.6,370.6 503.9,376.1" fill="#18714d" stroke="#18714d"/><polygon points="503.9,376.1 515.6,370.6 505.8,366.7 494.1,372.0" fill="#187348" stroke="#187348"/><polygon points="494.1,372.0 505.8,366.7 496.4,362.9 484.7,368.0" fill="#187544" stroke="#187544"/><polygon points="484.7,368.0 496.4,362.9 487.3,359.3 475.7,364.2" fill="#187741" stroke="#187741"/><polygon points="475.7,364.2 487.3,359.3 478.6,355.9 467.1,360.6" fill="#18783e" stroke="#18783e"/><polygon points="467.1,360.6 478.6,355.9 470.3,352.6 458.8,357.1" fill="#187a3b" stroke="#187a3b"/><polygon points="458.8,357.1 470.3,352.6 462.3,349.4 450.8,353.7" fill="#187b39" stroke="#187b39"/><polygon points="450.8,353.7 462.3,349.4 454.6,346.3 443.1,350.5" fill="#187b37" stroke="#187b37"/><polygon points="443.1,350.5 454.6,346.3 447.1,343.3 435.7,347.4" fill="#187c36" stroke="#187c36"/><polygon points="435.7,347.4 447.1,343.3 439.9,340.5 428.6,344.4" fill="#187c35" stroke="#187c35"/><polygon points="428.6,344.4 439.9,340.5 433.0,337.7 421.8,341.6" fill="#187d35" stroke="#187d35"/><polygon points="421.8,341.6 433.0,337.7 426.4,335.1 415.2,338.8" fill="#187c36" stroke="#187c36"/><polygon points="415.2,338.8 426.4,335.1 419.9,332.5 408.8,336.1" fill="#187c37" stroke="#187c37"/><polygon points="408.8,336.1 419.9,332.5 413.7,330.0 402.6,333.5" fill="#187b38" stroke="#187b38"/><polygon points="402.6,333.5 413.7,330.0 407.7,327.6 396.7,331.0" fill="#187b39" stroke="#187b39"/><polygon points="396.7,331.0 407.7,327.6 401.8,325.3 390.9,328.6" fill="#187a3a" stroke="#187a3a"/><polygon points="390.9,328.6 401.8,325.3 396.2,323.0 385.4,326.2" fill="#187a3a" stroke="#187a3a"/><polygon points="385.4,326.2 396.2,323.0 390.7,320.9 380.0,324.0" fill="#187a3a" stroke="#187a3a"/><polygon points="627.8,415.2 638.3,407.5 623.4,401.9 612.7,409.2" fill="#18616d" stroke="#18616d"/><polygon points="612.7,409.2 623.4,401.9 609.2,396.5 598.4,403.5" fill="#18616d" stroke="#18616d"/><polygon points="598.4,403.5 609.2,396.5 595.7,391.4 584.8,398.1" fill="#186367" stroke="#186367"/><polygon points="584.8,398.1 595.7,391.4 582.9,386.6 571.9,393.0" fill="#186760" stroke="#186760"/><polygon points="571.9,393.0 582.9,386.6 570.6,382.0 559.6,388.1" fill="#186a59" stroke="#186a59"/><polygon points="559.6,388.1 570.6,382.0 558.9,377.5 547.8,383.4" fill="#186e52" stroke="#186e52"/><polygon points="547.8,383.4 558.9,377.5 547.7,373.3 536.6,378.9" fill="#18714c" stroke="#18714c"/><polygon points="536.6,378.9 547.7,373.3 537.0,369.2 525.9,374.7" fill="#187446" stroke="#187446"/><polygon points="525.9,374.7 537.0,369.2 526.8,365.4 515.6,370.6" fill="#187740" stroke="#187740"/><polygon points="515.6,370.6 526.8,365.4 516.9,361.7 505.8,366.7" fill="#18793c" stroke="#18793c"/><polygon points="505.8,366.7 516.9,361.7 507.5,358.1 496.4,362.9" fill="#187b38" stroke="#187b38"/><polygon points="496.4,362.9 507.5,358.1 498.4,354.7 487.3,359.3" fill="#187d34" stroke="#187d34"/><polygon points="487.3,359.3 498.4,354.7 489.7,351.4 478.6,355.9" fill="#187e32" stroke="#187e32"/><polygon points="478.6,355.9 489.7,351.4 481.4,348.2 470.3,352.6" fill="#187f30" stroke="#187f30"/><polygon points="470.3,352.6 481.4,348.2 473.3,345.2 462.3,349.4" fill="#18802e" stroke="#18802e"/><polygon points="462.3,349.4 473.3,345.2 465.5,342.2 454.6,346.3" fill="#18812c" stroke="#18812c"/><polygon points="454.6,346.3 465.5,342.2 458.0,339.4 447.1,343.3" fill="#18812b" stroke="#18812b"/><polygon points="447.1,343.3 458.0,339.4 450.8,336.7 439.9,340.5" fill="#18822b" stroke="#18822b"/><polygon points="439.9,340.5 450.8,336.7 443.9,334.0 433.0,337.7" fill="#18822b" stroke="#18822b"/><polygon points="433.0,337.7 443.9,334.0 437.1,331.5 426.4,335.1" fill="#18812c" stroke="#18812c"/><polygon points="426.4,335.1 437.1,331.5 430.6,329.0 419.9,332.5" fill="#18812d" stroke="#18812d"/><polygon points="419.9,332.5 430.6,329.0 424.3,326.6 413.7,330.0" fill="#18802f" stroke="#18802f"/><polygon points="413.7,330.0 424.3,326.6 418.2,324.3 407.7,327.6" fill="#187f30" stroke="#187f30"/><polygon points="407.7,327.6 418.2,324.3 412.4,322.1 401.8,325.3" fill="#187e31" stroke="#187e31"/><polygon points="401.8,325.3 412.4,322.1 406.6,320.0 396.2,323.0" fill="#187e32" stroke="#187e32"/><polygon points="396.2,323.0 406.6,320.0 401.1,317.9 390.7,320.9" fill="#187e32" stroke="#187e32"/><polygon points="638.3,407.5 648.2,400.3 633.4,395.1 623.4,401.9" fill="#186760" stroke="#186760"/><polygon points="623.4,401.9 633.4,395.1 619.4,390.0 609.2,396.5" fill="#186760" stroke="#186760"/><polygon points="609.2,396.5 619.4,390.0 606.1,385.2 595.7,391.4" fill="#186a5a" stroke="#186a5a"/><polygon points="595.7,391.4 606.1,385.2 593.3,380.6 582.9,386.6" fill="#186e53" stroke="#186e53"/><polygon points="582.9,386.6 593.3,380.6 581.1,376.2 570.6,382.0" fill="#18714c" stroke="#18714c"/><polygon points="570.6,382.0 581.1,376.2 569.5,372.0 558.9,377.5" fill="#187545" stroke="#187545"/><polygon points="558.9,377.5 569.5,372.0 558.3,368.0 547.7,373.3" fill="#18783e" stroke="#18783e"/><polygon points="547.7,373.3 558.3,368.0 547.6,364.1 537.0,369.2" fill="#187b38" stroke="#187b38"/><polygon points="537.0,369.2 547.6,364.1 537.4,360.4 526.8,365.4" fill="#187e33" stroke="#187e33"/><polygon points="526.8,365.4 537.4,360.4 527.6,356.9 516.9,361.7" fill="#18802e" stroke="#18802e"/><polygon points="516.9,361.7 527.6,356.9 518.1,353.5 507.5,358.1" fill="#18822a" stroke="#18822a"/><polygon points="507.5,358.1 518.1,353.5 509.1,350.2 498.4,354.7" fill="#188327" stroke="#188327"/><polygon points="498.4,354.7 509.1,350.2 500.4,347.1 489.7,351.4" fill="#188525" stroke="#188525"/><polygon points="489.7,351.4 500.4,347.1 492.0,344.0 481.4,348.2" fill="#188623" stroke="#188623"/><polygon points="481.4,348.2 492.0,344.0 483.9,341.1 473.3,345.2" fill="#188622" stroke="#188622"/><polygon points="473.3,345.2 483.9,341.1 476.1,338.3 465.5,342.2" fill="#188721" stroke="#188721"/><polygon points="465.5,342.2 476.1,338.3 468.5,335.6 458.0,339.4" fill="#188720" stroke="#188720"/><polygon points="458.0,339.4 468.5,335.6 461.3,333.0 450.8,336.7" fill="#188720" stroke="#188720"/><polygon points="450.8,336.7 461.3,333.0 454.3,330.5 443.9,334.0" fill="#188720" stroke="#188720"/><polygon points="443.9,334.0 454.3,330.5 447.5,328.0 437.1,331.5" fill="#188622" stroke="#188622"/><polygon points="437.1,331.5 447.5,328.0 440.9,325.7 430.6,329.0" fill="#188623" stroke="#188623"/><polygon points="430.6,329.0 440.9,325.7 434.6,323.4 424.3,326.6" fill="#188525" stroke="#188525"/><polygon points="424.3,326.6 434.6,323.4 428.4,321.2 418.2,324.3" fill="#188427" stroke="#188427"/><polygon points="418.2,324.3 428.4,321.2 422.5,319.0 412.4,322.1" fill="#188329" stroke="#188329"/><polygon points="412.4,322.1 422.5,319.0 416.7,316.9 406.6,320.0" fill="#18822a" stroke="#18822a"/><polygon points="406.6,320.0 416.7,316.9 411.1,314.9 401.1,317.9" fill="#18822a" stroke="#18822a"/><polygon points="648.2,400.3 657.5,393.6 643.0,388.6 633.4,395.1" fill="#186e52" stroke="#186e52"/><polygon points="633.4,395.1 643.0,388.6 629.1,383.9 619.4,390.0" fill="#186e52" stroke="#186e52"/><polygon points="619.4,390.0 629.1,383.9 615.8,379.3 606.1,385.2" fill="#18714c" stroke="#18714c"/><polygon points="606.1,385.2 615.8,379.3 603.2,374.9 593.3,380.6" fill="#187445" stroke="#187445"/><polygon points="593.3,380.6 603.2,374.9 591.1,370.7 581.1,376.2" fill="#18783e" stroke="#18783e"/><polygon points="581.1,376.2 591.1,370.7 579.5,366.7 569.5,372.0" fill="#187c37" stroke="#187c37"/><polygon points="569.5,372.0 579.5,366.7 568.4,362.9 558.3,368.0" fill="#187f31" stroke="#187f31"/><polygon points="558.3,368.0 568.4,362.9 557.8,359.2 547.6,364.1" fill="#18822a" stroke="#18822a"/><polygon points="547.6,364.1 557.8,359.2 547.6,355.7 537.4,360.4" fill="#188525" stroke="#188525"/><polygon points="537.4,360.4 547.6,355.7 537.8,352.3 527.6,356.9" fill="#188721" stroke="#188721"/><polygon points="527.6,356.9 537.8,352.3 528.3,349.1 518.1,353.5" fill="#18891d" stroke="#18891d"/><polygon points="518.1,353.5 528.3,349.1 519.3,346.0 509.1,350.2" fill="#188a1b" stroke="#188a1b"/><polygon points="509.1,350.2 519.3,346.0 510.5,343.0 500.4,347.1" fill="#188b18" stroke="#188b18"/><polygon points="500.4,347.1 510.5,343.0 502.1,340.1 492.0,344.0" fill="#198c18" stroke="#198c18"/><polygon points="492.0,344.0 502.1,340.1 494.0,337.3 483.9,341.1" fill="#1a8c18" stroke="#1a8c18"/><polygon points="483.9,341.1 494.0,337.3 486.2,334.6 476.1,338.3" fill="#1b8d18" stroke="#1b8d18"/><polygon points="476.1,338.3 486.2,334.6 478.6,332.0 468.5,335.6" fill="#1b8d18" stroke="#1b8d18"/><polygon points="468.5,335.6 478.6,332.0 471.3,329.5 461.3,333.0" fill="#1b8d18" stroke="#1b8d18"/><polygon points="461.3,333.0 471.3,329.5 464.3,327.0 454.3,330.5" fill="#1a8c18" stroke="#1a8c18"/><polygon points="454.3,330.5 464.3,327.0 457.5,324.7 447.5,328.0" fill="#198c18" stroke="#198c18"/><polygon points="447.5,328.0 457.5,324.7 450.9,322.4 440.9,325.7" fill="#188b19" stroke="#188b19"/><polygon points="440.9,325.7 450.9,322.4 444.5,320.2 434.6,323.4" fill="#18891c" stroke="#18891c"/><polygon points="434.6,323.4 444.5,320.2 438.3,318.1 428.4,321.2" fill="#18881e" stroke="#18881e"/><polygon points="428.4,321.2 438.3,318.1 432.3,316.0 422.5,319.0" fill="#188720" stroke="#188720"/><polygon points="422.5,319.0 432.3,316.0 426.5,314.0 416.7,316.9" fill="#188622" stroke="#188622"/><polygon points="416.7,316.9 426.5,314.0 420.8,312.1 411.1,314.9" fill="#188622" stroke="#188622"/><polygon points="657.5,393.6 666.4,387.3 652.0,382.6 643.0,388.6" fill="#187545" stroke="#187545"/><polygon points="643.0,388.6 652.0,382.6 638.3,378.1 629.1,383.9" fill="#187545" stroke="#187545"/><polygon points="629.1,383.9 638.3,378.1 625.1,373.7 615.8,379.3" fill="#18783f" stroke="#18783f"/><polygon points="615.8,379.3 625.1,373.7 612.6,369.6 603.2,374.9" fill="#187b38" stroke="#187b38"/><polygon points="603.2,374.9 612.6,369.6 600.6,365.6 591.1,370.7" fill="#187f31" stroke="#187f31"/><polygon points="591.1,370.7 600.6,365.6 589.1,361.8 579.5,366.7" fill="#18822a" stroke="#18822a"/><polygon points="579.5,366.7 589.1,361.8 578.0,358.1 568.4,362.9" fill="#188623" stroke="#188623"/><polygon points="568.4,362.9 578.0,358.1 567.5,354.6 557.8,359.2" fill="#18891d" stroke="#18891d"/><polygon points="557.8,359.2 567.5,354.6 557.3,351.2 547.6,355.7" fill="#188b18" stroke="#188b18"/><polygon points="547.6,355.7 557.3,351.2 547.5,348.0 537.8,352.3" fill="#1d8d18" stroke="#1d8d18"/><polygon points="537.8,352.3 547.5,348.0 538.1,344.9 528.3,349.1" fill="#208f18" stroke="#208f18"/><polygon points="528.3,349.1 538.1,344.9 529.0,341.9 519.3,346.0" fill="#229018" stroke="#229018"/><polygon points="519.3,346.0 529.0,341.9 520.3,339.0 510.5,343.0" fill="#249118" stroke="#249118"/><polygon points="510.5,343.0 520.3,339.0 511.9,336.2 502.1,340.1" fill="#269218" stroke="#269218"/><polygon points="502.1,340.1 511.9,336.2 503.7,333.6 494.0,337.3" fill="#269218" stroke="#269218"/><polygon points="494.0,337.3 503.7,333.6 495.9,331.0 486.2,334.6" fill="#279318" stroke="#279318"/><polygon points="486.2,334.6 495.9,331.0 488.3,328.5 478.6,332.0" fill="#279318" stroke="#279318"/><polygon points="478.6,332.0 488.3,328.5 481.0,326.1 471.3,329.5" fill="#269218" stroke="#269218"/><polygon points="471.3,329.5 481.0,326.1 473.9,323.7 464.3,327.0" fill="#259218" stroke="#259218"/><polygon points="464.3,327.0 473.9,323.7 467.1,321.5 457.5,324.7" fill="#239118" stroke="#239118"/><polygon points="457.5,324.7 467.1,321.5 460.4,319.3 450.9,322.4" fill="#218f18" stroke="#218f18"/><polygon points="450.9,322.4 460.4,319.3 454.0,317.2 444.5,320.2" fill="#1e8e18" stroke="#1e8e18"/><polygon points="444.5,320.2 454.0,317.2 447.8,315.1 438.3,318.1" fill="#1b8d18" stroke="#1b8d18"/><polygon points="438.3,318.1 447.8,315.1 441.7,313.1 432.3,316.0" fill="#198c18" stroke="#198c18"/><polygon points="432.3,316.0 441.7,313.1 435.9,311.2 426.5,314.0" fill="#188a19" stroke="#188a19"/><polygon points="426.5,314.0 435.9,311.2 430.2,309.3 420.8,312.1" fill="#188a19" stroke="#188a19"/><polygon points="666.4,387.3 674.8,381.4 660.6,377.0 652.0,382.6" fill="#187c37" stroke="#187c37"/><polygon points="652.0,382.6 660.6,377.0 647.0,372.7 638.3,378.1" fill="#187c37" stroke="#187c37"/><polygon points="638.3,378.1 647.0,372.7 634.0,368.5 625.1,373.7" fill="#187f31" stroke="#187f31"/><polygon points="625.1,373.7 634.0,368.5 621.6,364.5 612.6,369.6" fill="#18822a" stroke="#18822a"/><polygon points="612.6,369.6 621.6,364.5 609.6,360.7 600.6,365.6" fill="#188623" stroke="#188623"/><polygon points="600.6,365.6 609.6,360.7 598.2,357.0 589.1,361.8" fill="#18891c" stroke="#18891c"/><polygon points="589.1,361.8 598.2,357.0 587.2,353.5 578.0,358.1" fill="#1b8d18" stroke="#1b8d18"/><polygon points="578.0,358.1 587.2,353.5 576.7,350.2 567.5,354.6" fill="#219018" stroke="#219018"/><polygon points="567.5,354.6 576.7,350.2 566.6,346.9 557.3,351.2" fill="#269218" stroke="#269218"/><polygon points="557.3,351.2 566.6,346.9 556.8,343.8 547.5,348.0" fill="#2a9418" stroke="#2a9418"/><polygon points="547.5,348.0 556.8,343.8 547.4,340.9 538.1,344.9" fill="#2d9618" stroke="#2d9618"/><polygon points="538.1,344.9 547.4,340.9 538.4,338.0 529.0,341.9" fill="#309718" stroke="#309718"/><polygon points="529.0,341.9 538.4,338.0 529.7,335.2 520.3,339.0" fill="#319818" stroke="#319818"/><polygon points="520.3,339.0 529.7,335.2 521.2,332.5 511.9,336.2" fill="#329818" stroke="#329818"/><polygon points="511.9,336.2 521.2,332.5 513.1,330.0 503.7,333.6" fill="#339918" stroke="#339918"/><polygon points="503.7,333.6 513.1,330.0 505.3,327.5 495.9,331.0" fill="#339918" stroke="#339918"/><polygon points="495.9,331.0 505.3,327.5 497.7,325.1 488.3,328.5" fill="#329818" stroke="#329818"/><polygon points="488.3,328.5 497.7,325.1 490.3,322.8 481.0,326.1" fill="#329818" stroke="#329818"/><polygon points="481.0,326.1 490.3,322.8 483.2,320.5 473.9,323.7" fill="#309718" stroke="#309718"/><polygon points="473.9,323.7 483.2,320.5 476.3,318.3 467.1,321.5" fill="#2e9618" stroke="#2e9618"/><polygon points="467.1,321.5 476.3,318.3 469.7,316.2 460.4,319.3" fill="#2b9518" stroke="#2b9518"/><polygon points="460.4,319.3 469.7,316.2 463.2,314.2 454.0,317.2" fill="#289318" stroke="#289318"/><polygon points="454.0,317.2 463.2,314.2 457.0,312.2 447.8,315.1" fill="#259218" stroke="#259218"/><polygon points="447.8,315.1 457.0,312.2 450.9,310.2 441.7,313.1" fill="#229018" stroke="#229018"/><polygon points="441.7,313.1 450.9,310.2 445.0,308.3 435.9,311.2" fill="#1f8f18" stroke="#1f8f18"/><polygon points="435.9,311.2 445.0,308.3 439.3,306.6 430.2,309.3" fill="#1f8f18" stroke="#1f8f18"/><polygon points="674.8,381.4 682.7,375.8 668.7,371.6 660.6,377.0" fill="#188329" stroke="#188329"/><polygon points="660.6,377.0 668.7,371.6 655.3,367.6 647.0,372.7" fill="#188329" stroke="#188329"/><polygon points="647.0,372.7 655.3,367.6 642.4,363.5 634.0,368.5" fill="#188623" stroke="#188623"/><polygon points="634.0,368.5 642.4,363.5 630.1,359.7 621.6,364.5" fill="#18891c" stroke="#18891c"/><polygon points="621.6,364.5 630.1,359.7 618.3,356.1 609.6,360.7" fill="#1b8d18" stroke="#1b8d18"/><polygon points="609.6,360.7 618.3,356.1 606.9,352.5 598.2,357.0" fill="#239018" stroke="#239018"/><polygon points="598.2,357.0 606.9,352.5 596.0,349.2 587.2,353.5" fill="#299418" stroke="#299418"/><polygon points="587.2,353.5 596.0,349.2 585.5,345.9 576.7,350.2" fill="#2f9718" stroke="#2f9718"/><polygon points="576.7,350.2 585.5,345.9 575.5,342.8 566.6,346.9" fill="#359918" stroke="#359918"/><polygon points="566.6,346.9 575.5,342.8 565.7,339.9 556.8,343.8" fill="#389b18" stroke="#389b18"/><polygon points="556.8,343.8 565.7,339.9 556.4,337.0 547.4,340.9" fill="#3b9d18" stroke="#3b9d18"/><polygon points="547.4,340.9 556.4,337.0 547.4,334.2 538.4,338.0" fill="#3e9e18" stroke="#3e9e18"/><polygon points="538.4,338.0 547.4,334.2 538.6,331.6 529.7,335.2" fill="#3f9f18" stroke="#3f9f18"/><polygon points="529.7,335.2 538.6,331.6 530.2,329.0 521.2,332.5" fill="#409f18" stroke="#409f18"/><polygon points="521.2,332.5 530.2,329.0 522.1,326.5 513.1,330.0" fill="#409f18" stroke="#409f18"/><polygon points="513.1,330.0 522.1,326.5 514.3,324.1 505.3,327.5" fill="#3f9f18" stroke="#3f9f18"/><polygon points="505.3,327.5 514.3,324.1 506.7,321.8 497.7,325.1" fill="#3f9e18" stroke="#3f9e18"/><polygon points="497.7,325.1 506.7,321.8 499.3,319.6 490.3,322.8" fill="#3d9e18" stroke="#3d9e18"/><polygon points="490.3,322.8 499.3,319.6 492.2,317.4 483.2,320.5" fill="#3b9d18" stroke="#3b9d18"/><polygon points="483.2,320.5 492.2,317.4 485.3,315.3 476.3,318.3" fill="#399c18" stroke="#399c18"/><polygon points="476.3,318.3 485.3,315.3 478.6,313.2 469.7,316.2" fill="#369a18" stroke="#369a18"/><polygon points="469.7,316.2 478.6,313.2 472.1,311.2 463.2,314.2" fill="#329818" stroke="#329818"/><polygon points="463.2,314.2 472.1,311.2 465.8,309.3 457.0,312.2" fill="#2f9718" stroke="#2f9718"/><polygon points="457.0,312.2 465.8,309.3 459.7,307.4 450.9,310.2" fill="#2b9518" stroke="#2b9518"/><polygon points="450.9,310.2 459.7,307.4 453.8,305.6 445.0,308.3" fill="#299318" stroke="#299318"/><polygon points="445.0,308.3 453.8,305.6 448.0,303.9 439.3,306.6" fill="#299318" stroke="#299318"/><polygon points="682.7,375.8 690.3,370.6 676.4,366.6 668.7,371.6" fill="#188a1a" stroke="#188a1a"/><polygon points="668.7,371.6 676.4,366.6 663.2,362.7 655.3,367.6" fill="#188a1a" stroke="#188a1a"/><polygon points="655.3,367.6 663.2,362.7 650.4,358.8 642.4,363.5" fill="#1c8d18" stroke="#1c8d18"/><polygon points="642.4,363.5 650.4,358.8 638.2,355.2 630.1,359.7" fill="#239118" stroke="#239118"/><polygon points="630.1,359.7 638.2,355.2 626.5,351.6 618.3,356.1" fill="#2b9418" stroke="#2b9418"/><polygon points="618.3,356.1 626.5,351.6 615.3,348.2 606.9,352.5" fill="#329818" stroke="#329818"/><polygon points="606.9,352.5 615.3,348.2 604.4,345.0 596.0,349.2" fill="#389b18" stroke="#389b18"/><polygon points="596.0,349.2 604.4,345.0 594.0,341.9 585.5,345.9" fill="#3f9e18" stroke="#3f9e18"/><polygon points="585.5,345.9 594.0,341.9 584.0,338.9 575.5,342.8" fill="#44a118" stroke="#44a118"/><polygon points="575.5,342.8 584.0,338.9 574.3,336.0 565.7,339.9" fill="#47a318" stroke="#47a318"/><polygon points="565.7,339.9 574.3,336.0 565.0,333.3 556.4,337.0" fill="#4aa418" stroke="#4aa418"/><polygon points="556.4,337.0 565.0,333.3 556.0,330.6 547.4,334.2" fill="#4ca518" stroke="#4ca518"/><polygon points="547.4,334.2 556.0,330.6 547.3,328.1 538.6,331.6" fill="#4da618" stroke="#4da618"/><polygon points="538.6,331.6 547.3,328.1 538.9,325.6 530.2,329.0" fill="#4ea618" stroke="#4ea618"/><polygon points="530.2,329.0 538.9,325.6 530.8,323.2 522.1,326.5" fill="#4da618" stroke="#4da618"/><polygon points="522.1,326.5 530.8,323.2 522.9,320.9 514.3,324.1" fill="#4da518" stroke="#4da518"/><polygon points="514.3,324.1 522.9,320.9 515.3,318.6 506.7,321.8" fill="#4ca518" stroke="#4ca518"/><polygon points="506.7,321.8 515.3,318.6 508.0,316.5 499.3,319.6" fill="#4aa418" stroke="#4aa418"/><polygon points="499.3,319.6 508.0,316.5 500.8,314.4 492.2,317.4" fill="#48a318" stroke="#48a318"/><polygon points="492.2,317.4 500.8,314.4 493.9,312.3 485.3,315.3" fill="#45a118" stroke="#45a118"/><polygon points="485.3,315.3 493.9,312.3 487.2,310.3 478.6,313.2" fill="#41a018" stroke="#41a018"/><polygon points="478.6,313.2 487.2,310.3 480.7,308.4 472.1,311.2" fill="#3d9e18" stroke="#3d9e18"/><polygon points="472.1,311.2 480.7,308.4 474.4,306.5 465.8,309.3" fill="#3a9c18" stroke="#3a9c18"/><polygon points="465.8,309.3 474.4,306.5 468.3,304.6 459.7,307.4" fill="#369a18" stroke="#369a18"/><polygon points="459.7,307.4 468.3,304.6 462.3,302.8 453.8,305.6" fill="#339818" stroke="#339818"/><polygon points="453.8,305.6 462.3,302.8 456.5,301.2 448.0,303.9" fill="#339818" stroke="#339818"/><polygon points="690.3,370.6 697.5,365.6 683.8,361.8 676.4,366.6" fill="#269218" stroke="#269218"/><polygon points="676.4,366.6 683.8,361.8 670.7,358.1 663.2,362.7" fill="#269218" stroke="#269218"/><polygon points="663.2,362.7 670.7,358.1 658.1,354.4 650.4,358.8" fill="#2c9518" stroke="#2c9518"/><polygon points="650.4,358.8 658.1,354.4 646.0,350.8 638.2,355.2" fill="#339918" stroke="#339918"/><polygon points="638.2,355.2 646.0,350.8 634.4,347.4 626.5,351.6" fill="#3b9c18" stroke="#3b9c18"/><polygon points="626.5,351.6 634.4,347.4 623.2,344.1 615.3,348.2" fill="#42a018" stroke="#42a018"/><polygon points="615.3,348.2 623.2,344.1 612.5,341.0 604.4,345.0" fill="#49a318" stroke="#49a318"/><polygon points="604.4,345.0 612.5,341.0 602.1,338.0 594.0,341.9" fill="#4fa618" stroke="#4fa618"/><polygon points="594.0,341.9 602.1,338.0 592.2,335.1 584.0,338.9" fill="#54a918" stroke="#54a918"/><polygon points="584.0,338.9 592.2,335.1 582.5,332.4 574.3,336.0" fill="#57ab18" stroke="#57ab18"/><polygon points="574.3,336.0 582.5,332.4 573.3,329.7 565.0,333.3" fill="#5aac18" stroke="#5aac18"/><polygon points="565.0,333.3 573.3,329.7 564.3,327.1 556.0,330.6" fill="#5bad18" stroke="#5bad18"/><polygon points="556.0,330.6 564.3,327.1 555.6,324.7 547.3,328.1" fill="#5cad18" stroke="#5cad18"/><polygon points="547.3,328.1 555.6,324.7 547.2,322.3 538.9,325.6" fill="#5cad18" stroke="#5cad18"/><polygon points="538.9,325.6 547.2,322.3 539.1,320.0 530.8,323.2" fill="#5cad18" stroke="#5cad18"/><polygon points="530.8,323.2 539.1,320.0 531.3,317.7 522.9,320.9" fill="#5bad18" stroke="#5bad18"/><polygon points="522.9,320.9 531.3,317.7 523.7,315.6 515.3,318.6" fill="#5aac18" stroke="#5aac18"/><polygon points="515.3,318.6 523.7,315.6 516.3,313.5 508.0,316.5" fill="#58ab18" stroke="#58ab18"/><polygon points="508.0,316.5 516.3,313.5 509.2,311.4 500.8,314.4" fill="#55aa18" stroke="#55aa18"/><polygon points="500.8,314.4 509.2,311.4 502.3,309.4 493.9,312.3" fill="#52a818" stroke="#52a818"/><polygon points="493.9,312.3 502.3,309.4 495.6,307.5 487.2,310.3" fill="#4ea618" stroke="#4ea618"/><polygon points="487.2,310.3 495.6,307.5 489.0,305.6 480.7,308.4" fill="#4aa418" stroke="#4aa418"/><polygon points="480.7,308.4 489.0,305.6 482.7,303.7 474.4,306.5" fill="#45a218" stroke="#45a218"/><polygon points="474.4,306.5 482.7,303.7 476.6,301.8 468.3,304.6" fill="#41a018" stroke="#41a018"/><polygon points="468.3,304.6 476.6,301.8 470.6,300.1 462.3,302.8" fill="#3e9e18" stroke="#3e9e18"/><polygon points="462.3,302.8 470.6,300.1 464.8,298.5 456.5,301.2" fill="#3e9e18" stroke="#3e9e18"/><polygon points="697.5,365.6 704.3,360.8 690.8,357.2 683.8,361.8" fill="#389b18" stroke="#389b18"/><polygon points="683.8,361.8 690.8,357.2 677.9,353.7 670.7,358.1" fill="#389b18" stroke="#389b18"/><polygon points="670.7,358.1 677.9,353.7 665.4,350.1 658.1,354.4" fill="#3e9e18" stroke="#3e9e18"/><polygon points="658.1,354.4 665.4,350.1 653.5,346.6 646.0,350.8" fill="#45a218" stroke="#45a218"/><polygon points="646.0,350.8 653.5,346.6 642.0,343.4 634.4,347.4" fill="#4da518" stroke="#4da518"/><polygon points="634.4,347.4 642.0,343.4 630.9,340.2 623.2,344.1" fill="#54a918" stroke="#54a918"/><polygon points="623.2,344.1 630.9,340.2 620.2,337.2 612.5,341.0" fill="#5bac18" stroke="#5bac18"/><polygon points="612.5,341.0 620.2,337.2 609.9,334.3 602.1,338.0" fill="#61af18" stroke="#61af18"/><polygon points="602.1,338.0 609.9,334.3 600.0,331.5 592.2,335.1" fill="#66b218" stroke="#66b218"/><polygon points="592.2,335.1 600.0,331.5 590.5,328.8 582.5,332.4" fill="#69b418" stroke="#69b418"/><polygon points="582.5,332.4 590.5,328.8 581.2,326.3 573.3,329.7" fill="#6cb518" stroke="#6cb518"/><polygon points="573.3,329.7 581.2,326.3 572.3,323.8 564.3,327.1" fill="#6db618" stroke="#6db618"/><polygon points="564.3,327.1 572.3,323.8 563.6,321.4 555.6,324.7" fill="#6eb618" stroke="#6eb618"/><polygon points="555.6,324.7 563.6,321.4 555.3,319.1 547.2,322.3" fill="#6db618" stroke="#6db618"/><polygon points="547.2,322.3 555.3,319.1 547.2,316.8 539.1,320.0" fill="#6db518" stroke="#6db518"/><polygon points="539.1,320.0 547.2,316.8 539.4,314.7 531.3,317.7" fill="#6bb518" stroke="#6bb518"/><polygon points="531.3,317.7 539.4,314.7 531.8,312.6 523.7,315.6" fill="#69b418" stroke="#69b418"/><polygon points="523.7,315.6 531.8,312.6 524.4,310.5 516.3,313.5" fill="#67b318" stroke="#67b318"/><polygon points="516.3,313.5 524.4,310.5 517.3,308.5 509.2,311.4" fill="#64b118" stroke="#64b118"/><polygon points="509.2,311.4 517.3,308.5 510.4,306.6 502.3,309.4" fill="#61af18" stroke="#61af18"/><polygon points="502.3,309.4 510.4,306.6 503.6,304.7 495.6,307.5" fill="#5cad18" stroke="#5cad18"/><polygon points="495.6,307.5 503.6,304.7 497.1,302.8 489.0,305.6" fill="#58ab18" stroke="#58ab18"/><polygon points="489.0,305.6 497.1,302.8 490.8,301.0 482.7,303.7" fill="#53a918" stroke="#53a918"/><polygon points="482.7,303.7 490.8,301.0 484.6,299.1 476.6,301.8" fill="#4fa718" stroke="#4fa718"/><polygon points="476.6,301.8 484.6,299.1 478.6,297.5 470.6,300.1" fill="#4ba518" stroke="#4ba518"/><polygon points="470.6,300.1 478.6,297.5 472.8,295.9 464.8,298.5" fill="#4ba518" stroke="#4ba518"/><polygon points="704.3,360.8 710.9,356.3 697.6,352.9 690.8,357.2" fill="#4ba518" stroke="#4ba518"/><polygon points="690.8,357.2 697.6,352.9 684.8,349.5 677.9,353.7" fill="#4ba518" stroke="#4ba518"/><polygon points="677.9,353.7 684.8,349.5 672.4,346.0 665.4,350.1" fill="#51a818" stroke="#51a818"/><polygon points="665.4,350.1 672.4,346.0 660.6,342.7 653.5,346.6" fill="#59ab18" stroke="#59ab18"/><polygon points="653.5,346.6 660.6,342.7 649.2,339.5 642.0,343.4" fill="#60af18" stroke="#60af18"/><polygon points="642.0,343.4 649.2,339.5 638.2,336.4 630.9,340.2" fill="#68b318" stroke="#68b318"/><polygon points="630.9,340.2 638.2,336.4 627.6,333.5 620.2,337.2" fill="#6fb618" stroke="#6fb618"/><polygon points="620.2,337.2 627.6,333.5 617.4,330.7 609.9,334.3" fill="#75b918" stroke="#75b918"/><polygon points="609.9,334.3 617.4,330.7 607.6,328.0 600.0,331.5" fill="#7abc18" stroke="#7abc18"/><polygon points="600.0,331.5 607.6,328.0 598.1,325.4 590.5,328.8" fill="#7dbe18" stroke="#7dbe18"/><polygon points="590.5,328.8 598.1,325.4 588.9,322.9 581.2,326.3" fill="#7fbf18" stroke="#7fbf18"/><polygon points="581.2,326.3 588.9,322.9 580.0,320.5 572.3,323.8" fill="#80bf18" stroke="#80bf18"/><polygon points="572.3,323.8 580.0,320.5 571.4,318.2 563.6,321.4" fill="#80bf18" stroke="#80bf18"/><polygon points="563.6,321.4 571.4,318.2 563.0,316.0 555.3,319.1" fill="#80bf18" stroke="#80bf18"/><polygon points="555.3,319.1 563.0,316.0 555.0,313.8 547.2,316.8" fill="#7fbe18" stroke="#7fbe18"/><polygon points="547.2,316.8 555.0,313.8 547.1,311.7 539.4,314.7" fill="#7dbd18" stroke="#7dbd18"/><polygon points="539.4,314.7 547.1,311.7 539.6,309.7 531.8,312.6" fill="#7bbc18" stroke="#7bbc18"/><polygon points="531.8,312.6 539.6,309.7 532.2,307.7 524.4,310.5" fill="#78bb18" stroke="#78bb18"/><polygon points="524.4,310.5 532.2,307.7 525.1,305.7 517.3,308.5" fill="#75ba18" stroke="#75ba18"/><polygon points="517.3,308.5 525.1,305.7 518.2,303.8 510.4,306.6" fill="#71b718" stroke="#71b718"/><polygon points="510.4,306.6 518.2,303.8 511.4,301.9 503.6,304.7" fill="#6cb518" stroke="#6cb518"/><polygon points="503.6,304.7 511.4,301.9 504.9,300.1 497.1,302.8" fill="#68b318" stroke="#68b318"/><polygon points="497.1,302.8 504.9,300.1 498.5,298.3 490.8,301.0" fill="#63b018" stroke="#63b018"/><polygon points="490.8,301.0 498.5,298.3 492.4,296.5 484.6,299.1" fill="#5eae18" stroke="#5eae18"/><polygon points="484.6,299.1 492.4,296.5 486.4,294.8 478.6,297.5" fill="#5aac18" stroke="#5aac18"/><polygon points="478.6,297.5 486.4,294.8 480.5,293.4 472.8,295.9" fill="#5aac18" stroke="#5aac18"/><polygon points="710.9,356.3 717.1,351.9 704.0,348.7 697.6,352.9" fill="#5faf18" stroke="#5faf18"/><polygon points="697.6,352.9 704.0,348.7 691.3,345.4 684.8,349.5" fill="#5faf18" stroke="#5faf18"/><polygon points="684.8,349.5 691.3,345.4 679.2,342.0 672.4,346.0" fill="#66b218" stroke="#66b218"/><polygon points="672.4,346.0 679.2,342.0 667.4,338.8 660.6,342.7" fill="#6db618" stroke="#6db618"/><polygon points="660.6,342.7 667.4,338.8 656.1,335.7 649.2,339.5" fill="#75b918" stroke="#75b918"/><polygon points="649.2,339.5 656.1,335.7 645.3,332.8 638.2,336.4" fill="#7cbd18" stroke="#7cbd18"/><polygon points="638.2,336.4 645.3,332.8 634.8,329.9 627.6,333.5" fill="#83c118" stroke="#83c118"/><polygon points="627.6,333.5 634.8,329.9 624.6,327.2 617.4,330.7" fill="#89c418" stroke="#89c418"/><polygon points="617.4,330.7 624.6,327.2 614.8,324.6 607.6,328.0" fill="#8ec618" stroke="#8ec618"/><polygon points="607.6,328.0 614.8,324.6 605.4,322.1 598.1,325.4" fill="#91c818" stroke="#91c818"/><polygon points="598.1,325.4 605.4,322.1 596.2,319.7 588.9,322.9" fill="#93c918" stroke="#93c918"/><polygon points="588.9,322.9 596.2,319.7 587.4,317.4 580.0,320.5" fill="#94c918" stroke="#94c918"/><polygon points="580.0,320.5 587.4,317.4 578.8,315.1 571.4,318.2" fill="#94c918" stroke="#94c918"/><polygon points="571.4,318.2 578.8,315.1 570.5,313.0 563.0,316.0" fill="#93c818" stroke="#93c818"/><polygon points="563.0,316.0 570.5,313.0 562.5,310.8 555.0,313.8" fill="#91c818" stroke="#91c818"/><polygon points="555.0,313.8 562.5,310.8 554.7,308.8 547.1,311.7" fill="#8fc718" stroke="#8fc718"/><polygon points="547.1,311.7 554.7,308.8 547.1,306.8 539.6,309.7" fill="#8dc518" stroke="#8dc518"/><polygon points="539.6,309.7 547.1,306.8 539.8,304.9 532.2,307.7" fill="#8ac418" stroke="#8ac418"/><polygon points="532.2,307.7 539.8,304.9 532.6,303.0 525.1,305.7" fill="#86c218" stroke="#86c218"/><polygon points="525.1,305.7 532.6,303.0 525.7,301.1 518.2,303.8" fill="#82c018" stroke="#82c018"/><polygon points="518.2,303.8 525.7,301.1 519.0,299.3 511.4,301.9" fill="#7dbe18" stroke="#7dbe18"/><polygon points="511.4,301.9 519.0,299.3 512.4,297.5 504.9,300.1" fill="#78bb18" stroke="#78bb18"/><polygon points="504.9,300.1 512.4,297.5 506.1,295.7 498.5,298.3" fill="#73b818" stroke="#73b818"/><polygon points="498.5,298.3 506.1,295.7 499.9,293.9 492.4,296.5" fill="#6eb618" stroke="#6eb618"/><polygon points="492.4,296.5 499.9,293.9 493.9,292.3 486.4,294.8" fill="#69b418" stroke="#69b418"/><polygon points="486.4,294.8 493.9,292.3 488.0,290.9 480.5,293.4" fill="#69b418" stroke="#69b418"/><polygon points="717.1,351.9 723.1,347.7 710.1,344.6 704.0,348.7" fill="#74b918" stroke="#74b918"/><polygon points="704.0,348.7 710.1,344.6 697.6,341.5 691.3,345.4" fill="#74b918" stroke="#74b918"/><polygon points="691.3,345.4 697.6,341.5 685.6,338.2 679.2,342.0" fill="#7abc18" stroke="#7abc18"/><polygon points="679.2,342.0 685.6,338.2 674.0,335.1 667.4,338.8" fill="#81c018" stroke="#81c018"/><polygon points="667.4,338.8 674.0,335.1 662.8,332.1 656.1,335.7" fill="#89c318" stroke="#89c318"/><polygon points="656.1,335.7 662.8,332.1 652.0,329.2 645.3,332.8" fill="#91c718" stroke="#91c718"/><polygon points="645.3,332.8 652.0,329.2 641.6,326.5 634.8,329.9" fill="#98cb18" stroke="#98cb18"/><polygon points="634.8,329.9 641.6,326.5 631.6,323.9 624.6,327.2" fill="#9ece18" stroke="#9ece18"/><polygon points="624.6,327.2 631.6,323.9 621.8,321.3 614.8,324.6" fill="#a3d018" stroke="#a3d018"/><polygon points="614.8,324.6 621.8,321.3 612.4,318.9 605.4,322.1" fill="#a6d218" stroke="#a6d218"/><polygon points="605.4,322.1 612.4,318.9 603.3,316.6 596.2,319.7" fill="#a7d318" stroke="#a7d318"/><polygon points="596.2,319.7 603.3,316.6 594.5,314.3 587.4,317.4" fill="#a8d318" stroke="#a8d318"/><polygon points="587.4,317.4 594.5,314.3 586.0,312.1 578.8,315.1" fill="#a8d318" stroke="#a8d318"/><polygon points="578.8,315.1 586.0,312.1 577.7,310.0 570.5,313.0" fill="#a6d218" stroke="#a6d218"/><polygon points="570.5,313.0 577.7,310.0 569.7,308.0 562.5,310.8" fill="#a4d118" stroke="#a4d118"/><polygon points="562.5,310.8 569.7,308.0 561.9,306.0 554.7,308.8" fill="#a2d018" stroke="#a2d018"/><polygon points="554.7,308.8 561.9,306.0 554.4,304.1 547.1,306.8" fill="#9fce18" stroke="#9fce18"/><polygon points="547.1,306.8 554.4,304.1 547.1,302.2 539.8,304.9" fill="#9ccd18" stroke="#9ccd18"/><polygon points="539.8,304.9 547.1,302.2 539.9,300.4 532.6,303.0" fill="#98cb18" stroke="#98cb18"/><polygon points="532.6,303.0 539.9,300.4 533.0,298.5 525.7,301.1" fill="#93c918" stroke="#93c918"/><polygon points="525.7,301.1 533.0,298.5 526.3,296.7 519.0,299.3" fill="#8ec618" stroke="#8ec618"/><polygon points="519.0,299.3 526.3,296.7 519.8,295.0 512.4,297.5" fill="#88c318" stroke="#88c318"/><polygon points="512.4,297.5 519.8,295.0 513.4,293.2 506.1,295.7" fill="#83c018" stroke="#83c018"/><polygon points="506.1,295.7 513.4,293.2 507.2,291.4 499.9,293.9" fill="#7ebe18" stroke="#7ebe18"/><polygon points="499.9,293.9 507.2,291.4 501.2,289.9 493.9,292.3" fill="#79bb18" stroke="#79bb18"/><polygon points="493.9,292.3 501.2,289.9 495.3,288.5 488.0,290.9" fill="#79bb18" stroke="#79bb18"/><polygon points="723.1,347.7 728.8,343.6 716.0,340.7 710.1,344.6" fill="#87c218" stroke="#87c218"/><polygon points="710.1,344.6 716.0,340.7 703.6,337.7 697.6,341.5" fill="#87c218" stroke="#87c218"/><polygon points="697.6,341.5 703.6,337.7 691.7,334.5 685.6,338.2" fill="#8dc618" stroke="#8dc618"/><polygon points="685.6,338.2 691.7,334.5 680.3,331.5 674.0,335.1" fill="#95c918" stroke="#95c918"/><polygon points="674.0,335.1 680.3,331.5 669.2,328.6 662.8,332.1" fill="#9ccd18" stroke="#9ccd18"/><polygon points="662.8,332.1 669.2,328.6 658.5,325.8 652.0,329.2" fill="#a4d118" stroke="#a4d118"/><polygon points="652.0,329.2 658.5,325.8 648.2,323.1 641.6,326.5" fill="#abd418" stroke="#abd418"/><polygon points="641.6,326.5 648.2,323.1 638.2,320.6 631.6,323.9" fill="#b1d718" stroke="#b1d718"/><polygon points="631.6,323.9 638.2,320.6 628.6,318.1 621.8,321.3" fill="#b6da18" stroke="#b6da18"/><polygon points="621.8,321.3 628.6,318.1 619.2,315.8 612.4,318.9" fill="#b9db18" stroke="#b9db18"/><polygon points="612.4,318.9 619.2,315.8 610.2,313.5 603.3,316.6" fill="#badc18" stroke="#badc18"/><polygon points="603.3,316.6 610.2,313.5 601.4,311.3 594.5,314.3" fill="#bbdc18" stroke="#bbdc18"/><polygon points="594.5,314.3 601.4,311.3 592.9,309.2 586.0,312.1" fill="#badc18" stroke="#badc18"/><polygon points="586.0,312.1 592.9,309.2 584.7,307.2 577.7,310.0" fill="#b8db18" stroke="#b8db18"/><polygon points="577.7,310.0 584.7,307.2 576.7,305.2 569.7,308.0" fill="#b6da18" stroke="#b6da18"/><polygon points="569.7,308.0 576.7,305.2 569.0,303.3 561.9,306.0" fill="#b3d918" stroke="#b3d918"/><polygon points="561.9,306.0 569.0,303.3 561.4,301.4 554.4,304.1" fill="#b0d718" stroke="#b0d718"/><polygon points="554.4,304.1 561.4,301.4 554.1,299.6 547.1,302.2" fill="#add518" stroke="#add518"/><polygon points="547.1,302.2 554.1,299.6 547.0,297.8 539.9,300.4" fill="#a8d318" stroke="#a8d318"/><polygon points="539.9,300.4 547.0,297.8 540.1,296.0 533.0,298.5" fill="#a4d118" stroke="#a4d118"/><polygon points="533.0,298.5 540.1,296.0 533.4,294.3 526.3,296.7" fill="#9ece18" stroke="#9ece18"/><polygon points="526.3,296.7 533.4,294.3 526.9,292.5 519.8,295.0" fill="#98cb18" stroke="#98cb18"/><polygon points="519.8,295.0 526.9,292.5 520.5,290.8 513.4,293.2" fill="#92c818" stroke="#92c818"/><polygon points="513.4,293.2 520.5,290.8 514.3,289.1 507.2,291.4" fill="#8dc518" stroke="#8dc518"/><polygon points="507.2,291.4 514.3,289.1 508.3,287.6 501.2,289.9" fill="#88c318" stroke="#88c318"/><polygon points="501.2,289.9 508.3,287.6 502.4,286.2 495.3,288.5" fill="#88c318" stroke="#88c318"/><polygon points="728.8,343.6 734.3,339.7 721.6,336.9 716.0,340.7" fill="#99cb18" stroke="#99cb18"/><polygon points="716.0,340.7 721.6,336.9 709.4,334.0 703.6,337.7" fill="#99cb18" stroke="#99cb18"/><polygon points="703.6,337.7 709.4,334.0 697.7,330.9 691.7,334.5" fill="#9fce18" stroke="#9fce18"/><polygon points="691.7,334.5 697.7,330.9 686.3,328.0 680.3,331.5" fill="#a6d218" stroke="#a6d218"/><polygon points="680.3,331.5 686.3,328.0 675.4,325.2 669.2,328.6" fill="#aed618" stroke="#aed618"/><polygon points="669.2,328.6 675.4,325.2 664.8,322.5 658.5,325.8" fill="#b6da18" stroke="#b6da18"/><polygon points="658.5,325.8 664.8,322.5 654.5,319.9 648.2,323.1" fill="#bddd18" stroke="#bddd18"/><polygon points="648.2,323.1 654.5,319.9 644.6,317.4 638.2,320.6" fill="#c2e018" stroke="#c2e018"/><polygon points="638.2,320.6 644.6,317.4 635.1,315.0 628.6,318.1" fill="#c7e218" stroke="#c7e218"/><polygon points="628.6,318.1 635.1,315.0 625.8,312.7 619.2,315.8" fill="#cae418" stroke="#cae418"/><polygon points="619.2,315.8 625.8,312.7 616.8,310.5 610.2,313.5" fill="#cbe518" stroke="#cbe518"/><polygon points="610.2,313.5 616.8,310.5 608.1,308.4 601.4,311.3" fill="#cbe518" stroke="#cbe518"/><polygon points="601.4,311.3 608.1,308.4 599.6,306.4 592.9,309.2" fill="#cbe418" stroke="#cbe418"/><polygon points="592.9,309.2 599.6,306.4 591.4,304.4 584.7,307.2" fill="#c9e318" stroke="#c9e318"/><polygon points="584.7,307.2 591.4,304.4 583.5,302.5 576.7,305.2" fill="#c6e218" stroke="#c6e218"/><polygon points="576.7,305.2 583.5,302.5 575.8,300.7 569.0,303.3" fill="#c3e018" stroke="#c3e018"/><polygon points="569.0,303.3 575.8,300.7 568.3,298.9 561.4,301.4" fill="#c0df18" stroke="#c0df18"/><polygon points="561.4,301.4 568.3,298.9 561.0,297.1 554.1,299.6" fill="#bcdd18" stroke="#bcdd18"/><polygon points="554.1,299.6 561.0,297.1 553.9,295.4 547.0,297.8" fill="#b8db18" stroke="#b8db18"/><polygon points="547.0,297.8 553.9,295.4 547.0,293.6 540.1,296.0" fill="#b2d818" stroke="#b2d818"/><polygon points="540.1,296.0 547.0,293.6 540.3,291.9 533.4,294.3" fill="#add518" stroke="#add518"/><polygon points="533.4,294.3 540.3,291.9 533.7,290.3 526.9,292.5" fill="#a7d218" stroke="#a7d218"/><polygon points="526.9,292.5 533.7,290.3 527.4,288.6 520.5,290.8" fill="#a1cf18" stroke="#a1cf18"/><polygon points="520.5,290.8 527.4,288.6 521.2,286.9 514.3,289.1" fill="#9bcc18" stroke="#9bcc18"/><polygon points="514.3,289.1 521.2,286.9 515.2,285.4 508.3,287.6" fill="#95ca18" stroke="#95ca18"/><polygon points="508.3,287.6 515.2,285.4 509.3,284.1 502.4,286.2" fill="#95ca18" stroke="#95ca18"/><polygon points="734.3,339.7 739.5,335.8 727.0,333.2 721.6,336.9" fill="#a9d318" stroke="#a9d318"/><polygon points="721.6,336.9 727.0,333.2 715.0,330.4 709.4,334.0" fill="#a9d318" stroke="#a9d318"/><polygon points="709.4,334.0 715.0,330.4 703.4,327.4 697.7,330.9" fill="#afd618" stroke="#afd618"/><polygon points="697.7,330.9 703.4,327.4 692.1,324.5 686.3,328.0" fill="#b6da18" stroke="#b6da18"/><polygon points="686.3,328.0 692.1,324.5 681.3,321.8 675.4,325.2" fill="#bdde18" stroke="#bdde18"/><polygon points="675.4,325.2 681.3,321.8 670.8,319.2 664.8,322.5" fill="#c5e118" stroke="#c5e118"/><polygon points="664.8,322.5 670.8,319.2 660.6,316.7 654.5,319.9" fill="#cbe418" stroke="#cbe418"/><polygon points="654.5,319.9 660.6,316.7 650.8,314.3 644.6,317.4" fill="#d1e718" stroke="#d1e718"/><polygon points="644.6,317.4 650.8,314.3 641.3,312.0 635.1,315.0" fill="#d5ea18" stroke="#d5ea18"/><polygon points="635.1,315.0 641.3,312.0 632.1,309.8 625.8,312.7" fill="#d8eb18" stroke="#d8eb18"/><polygon points="625.8,312.7 632.1,309.8 623.2,307.7 616.8,310.5" fill="#d9ec18" stroke="#d9ec18"/><polygon points="616.8,310.5 623.2,307.7 614.5,305.6 608.1,308.4" fill="#d9ec18" stroke="#d9ec18"/><polygon points="608.1,308.4 614.5,305.6 606.1,303.6 599.6,306.4" fill="#d8eb18" stroke="#d8eb18"/><polygon points="599.6,306.4 606.1,303.6 598.0,301.7 591.4,304.4" fill="#d6ea18" stroke="#d6ea18"/><polygon points="591.4,304.4 598.0,301.7 590.0,299.9 583.5,302.5" fill="#d4e918" stroke="#d4e918"/><polygon points="583.5,302.5 590.0,299.9 582.3,298.1 575.8,300.7" fill="#d1e718" stroke="#d1e718"/><polygon points="575.8,300.7 582.3,298.1 574.9,296.4 568.3,298.9" fill="#cde518" stroke="#cde518"/><polygon points="568.3,298.9 574.9,296.4 567.6,294.7 561.0,297.1" fill="#c9e418" stroke="#c9e418"/><polygon points="561.0,297.1 567.6,294.7 560.5,293.0 553.9,295.4" fill="#c5e118" stroke="#c5e118"/><polygon points="553.9,295.4 560.5,293.0 553.6,291.3 547.0,293.6" fill="#bfde18" stroke="#bfde18"/><polygon points="547.0,293.6 553.6,291.3 546.9,289.7 540.3,291.9" fill="#b9db18" stroke="#b9db18"/><polygon points="540.3,291.9 546.9,289.7 540.4,288.1 533.7,290.3" fill="#b3d818" stroke="#b3d818"/><polygon points="533.7,290.3 540.4,288.1 534.1,286.5 527.4,288.6" fill="#add518" stroke="#add518"/><polygon points="527.4,288.6 534.1,286.5 527.9,284.8 521.2,286.9" fill="#a6d218" stroke="#a6d218"/><polygon points="521.2,286.9 527.9,284.8 521.9,283.4 515.2,285.4" fill="#a1cf18" stroke="#a1cf18"/><polygon points="515.2,285.4 521.9,283.4 516.0,282.2 509.3,284.1" fill="#a1cf18" stroke="#a1cf18"/><polygon points="739.5,335.8 744.6,332.1 732.2,329.5 727.0,333.2" fill="#b6da18" stroke="#b6da18"/><polygon points="727.0,333.2 732.2,329.5 720.3,326.8 715.0,330.4" fill="#b6da18" stroke="#b6da18"/><polygon points="715.0,330.4 720.3,326.8 708.8,323.9 703.4,327.4" fill="#bcdd18" stroke="#bcdd18"/><polygon points="703.4,327.4 708.8,323.9 697.7,321.2 692.1,324.5" fill="#c2e018" stroke="#c2e018"/><polygon points="692.1,324.5 697.7,321.2 687.0,318.5 681.3,321.8" fill="#c9e418" stroke="#c9e418"/><polygon points="681.3,321.8 687.0,318.5 676.6,316.0 670.8,319.2" fill="#d0e718" stroke="#d0e718"/><polygon points="670.8,319.2 676.6,316.0 666.5,313.6 660.6,316.7" fill="#d7ea18" stroke="#d7ea18"/><polygon points="660.6,316.7 666.5,313.6 656.8,311.2 650.8,314.3" fill="#dced18" stroke="#dced18"/><polygon points="650.8,314.3 656.8,311.2 647.4,309.0 641.3,312.0" fill="#e0ef18" stroke="#e0ef18"/><polygon points="641.3,312.0 647.4,309.0 638.2,306.9 632.1,309.8" fill="#e3f018" stroke="#e3f018"/><polygon points="632.1,309.8 638.2,306.9 629.3,304.8 623.2,307.7" fill="#e4f118" stroke="#e4f118"/><polygon points="623.2,307.7 629.3,304.8 620.7,302.9 614.5,305.6" fill="#e4f118" stroke="#e4f118"/><polygon points="614.5,305.6 620.7,302.9 612.4,301.0 606.1,303.6" fill="#e3f018" stroke="#e3f018"/><polygon points="606.1,303.6 612.4,301.0 604.3,299.1 598.0,301.7" fill="#e1ef18" stroke="#e1ef18"/><polygon points="598.0,301.7 604.3,299.1 596.4,297.4 590.0,299.9" fill="#deee18" stroke="#deee18"/><polygon points="590.0,299.9 596.4,297.4 588.7,295.6 582.3,298.1" fill="#dbec18" stroke="#dbec18"/><polygon points="582.3,298.1 588.7,295.6 581.3,294.0 574.9,296.4" fill="#d8eb18" stroke="#d8eb18"/><polygon points="574.9,296.4 581.3,294.0 574.0,292.3 567.6,294.7" fill="#d4e918" stroke="#d4e918"/><polygon points="567.6,294.7 574.0,292.3 567.0,290.7 560.5,293.0" fill="#cfe618" stroke="#cfe618"/><polygon points="560.5,293.0 567.0,290.7 560.1,289.2 553.6,291.3" fill="#c9e318" stroke="#c9e318"/><polygon points="553.6,291.3 560.1,289.2 553.4,287.6 546.9,289.7" fill="#c3e018" stroke="#c3e018"/><polygon points="546.9,289.7 553.4,287.6 546.9,286.1 540.4,288.1" fill="#bddd18" stroke="#bddd18"/><polygon points="540.4,288.1 546.9,286.1 540.6,284.5 534.1,286.5" fill="#b6da18" stroke="#b6da18"/><polygon points="534.1,286.5 540.6,284.5 534.4,283.0 527.9,284.8" fill="#b0d718" stroke="#b0d718"/><polygon points="527.9,284.8 534.4,283.0 528.4,281.6 521.9,283.4" fill="#aad418" stroke="#aad418"/><polygon points="521.9,283.4 528.4,281.6 522.5,280.4 516.0,282.2" fill="#aad418" stroke="#aad418"/><polygon points="744.6,332.1 749.4,328.3 737.2,325.9 732.2,329.5" fill="#c1e018" stroke="#c1e018"/><polygon points="732.2,329.5 737.2,325.9 725.5,323.3 720.3,326.8" fill="#c1e018" stroke="#c1e018"/><polygon points="720.3,326.8 725.5,323.3 714.1,320.5 708.8,323.9" fill="#c6e218" stroke="#c6e218"/><polygon points="708.8,323.9 714.1,320.5 703.1,317.8 697.7,321.2" fill="#cde518" stroke="#cde518"/><polygon points="697.7,321.2 703.1,317.8 692.5,315.3 687.0,318.5" fill="#d3e818" stroke="#d3e818"/><polygon points="687.0,318.5 692.5,315.3 682.2,312.8 676.6,316.0" fill="#d9eb18" stroke="#d9eb18"/><polygon points="676.6,316.0 682.2,312.8 672.2,310.5 666.5,313.6" fill="#dfee18" stroke="#dfee18"/><polygon points="666.5,313.6 672.2,310.5 662.5,308.2 656.8,311.2" fill="#e4f118" stroke="#e4f118"/><polygon points="656.8,311.2 662.5,308.2 653.2,306.1 647.4,309.0" fill="#e8f318" stroke="#e8f318"/><polygon points="647.4,309.0 653.2,306.1 644.1,304.0 638.2,306.9" fill="#eaf418" stroke="#eaf418"/><polygon points="638.2,306.9 644.1,304.0 635.3,302.0 629.3,304.8" fill="#ebf418" stroke="#ebf418"/><polygon points="629.3,304.8 635.3,302.0 626.7,300.2 620.7,302.9" fill="#ebf418" stroke="#ebf418"/><polygon points="620.7,302.9 626.7,300.2 618.4,298.3 612.4,301.0" fill="#eaf418" stroke="#eaf418"/><polygon points="612.4,301.0 618.4,298.3 610.4,296.6 604.3,299.1" fill="#e8f318" stroke="#e8f318"/><polygon points="604.3,299.1 610.4,296.6 602.5,294.9 596.4,297.4" fill="#e6f218" stroke="#e6f218"/><polygon points="596.4,297.4 602.5,294.9 594.9,293.2 588.7,295.6" fill="#e3f018" stroke="#e3f018"/><polygon points="588.7,295.6 594.9,293.2 587.5,291.6 581.3,294.0" fill="#e0ef18" stroke="#e0ef18"/><polygon points="581.3,294.0 587.5,291.6 580.3,290.1 574.0,292.3" fill="#dced18" stroke="#dced18"/><polygon points="574.0,292.3 580.3,290.1 573.2,288.6 567.0,290.7" fill="#d7ea18" stroke="#d7ea18"/><polygon points="567.0,290.7 573.2,288.6 566.4,287.1 560.1,289.2" fill="#d1e718" stroke="#d1e718"/><polygon points="560.1,289.2 566.4,287.1 559.7,285.6 553.4,287.6" fill="#cbe418" stroke="#cbe418"/><polygon points="553.4,287.6 559.7,285.6 553.2,284.1 546.9,286.1" fill="#c4e118" stroke="#c4e118"/><polygon points="546.9,286.1 553.2,284.1 546.9,282.7 540.6,284.5" fill="#bdde18" stroke="#bdde18"/><polygon points="540.6,284.5 546.9,282.7 540.7,281.2 534.4,283.0" fill="#b7da18" stroke="#b7da18"/><polygon points="534.4,283.0 540.7,281.2 534.7,279.9 528.4,281.6" fill="#b1d718" stroke="#b1d718"/><polygon points="528.4,281.6 534.7,279.9 528.8,278.8 522.5,280.4" fill="#b1d718" stroke="#b1d718"/><polygon points="749.4,328.3 754.0,324.6 742.0,322.3 737.2,325.9" fill="#cbe418" stroke="#cbe418"/><polygon points="737.2,325.9 742.0,322.3 730.4,319.8 725.5,323.3" fill="#cbe418" stroke="#cbe418"/><polygon points="725.5,323.3 730.4,319.8 719.2,317.1 714.1,320.5" fill="#cfe718" stroke="#cfe718"/><polygon points="714.1,320.5 719.2,317.1 708.3,314.5 703.1,317.8" fill="#d5e918" stroke="#d5e918"/><polygon points="703.1,317.8 708.3,314.5 697.8,312.1 692.5,315.3" fill="#daec18" stroke="#daec18"/><polygon points="692.5,315.3 697.8,312.1 687.6,309.7 682.2,312.8" fill="#e0ef18" stroke="#e0ef18"/><polygon points="682.2,312.8 687.6,309.7 677.7,307.4 672.2,310.5" fill="#e5f118" stroke="#e5f118"/><polygon points="672.2,310.5 677.7,307.4 668.1,305.3 662.5,308.2" fill="#e9f318" stroke="#e9f318"/><polygon points="662.5,308.2 668.1,305.3 658.8,303.2 653.2,306.1" fill="#edf518" stroke="#edf518"/><polygon points="653.2,306.1 658.8,303.2 649.8,301.2 644.1,304.0" fill="#eff618" stroke="#eff618"/><polygon points="644.1,304.0 649.8,301.2 641.1,299.3 635.3,302.0" fill="#f0f718" stroke="#f0f718"/><polygon points="635.3,302.0 641.1,299.3 632.6,297.5 626.7,300.2" fill="#f0f718" stroke="#f0f718"/><polygon points="626.7,300.2 632.6,297.5 624.3,295.7 618.4,298.3" fill="#eff618" stroke="#eff618"/><polygon points="618.4,298.3 624.3,295.7 616.3,294.1 610.4,296.6" fill="#eef618" stroke="#eef618"/><polygon points="610.4,296.6 616.3,294.1 608.5,292.4 602.5,294.9" fill="#ecf518" stroke="#ecf518"/><polygon points="602.5,294.9 608.5,292.4 600.9,290.9 594.9,293.2" fill="#e9f318" stroke="#e9f318"/><polygon points="594.9,293.2 600.9,290.9 593.5,289.4 587.5,291.6" fill="#e6f218" stroke="#e6f218"/><polygon points="587.5,291.6 593.5,289.4 586.3,287.9 580.3,290.1" fill="#e2f018" stroke="#e2f018"/><polygon points="580.3,290.1 586.3,287.9 579.3,286.4 573.2,288.6" fill="#dded18" stroke="#dded18"/><polygon points="573.2,288.6 579.3,286.4 572.5,285.0 566.4,287.1" fill="#d7ea18" stroke="#d7ea18"/><polygon points="566.4,287.1 572.5,285.0 565.8,283.7 559.7,285.6" fill="#d1e718" stroke="#d1e718"/><polygon points="559.7,285.6 565.8,283.7 559.3,282.3 553.2,284.1" fill="#cae418" stroke="#cae418"/><polygon points="553.2,284.1 559.3,282.3 553.0,281.0 546.9,282.7" fill="#c3e018" stroke="#c3e018"/><polygon points="546.9,282.7 553.0,281.0 546.9,279.6 540.7,281.2" fill="#bcdd18" stroke="#bcdd18"/><polygon points="540.7,281.2 546.9,279.6 540.8,278.4 534.7,279.9" fill="#b6da18" stroke="#b6da18"/><polygon points="534.7,279.9 540.8,278.4 535.0,277.3 528.8,278.8" fill="#b6da18" stroke="#b6da18"/><polygon points="754.0,324.6 758.5,320.9 746.6,318.7 742.0,322.3" fill="#d3e818" stroke="#d3e818"/><polygon points="742.0,322.3 746.6,318.7 735.1,316.3 730.4,319.8" fill="#d3e818" stroke="#d3e818"/><polygon points="730.4,319.8 735.1,316.3 724.0,313.7 719.2,317.1" fill="#d7ea18" stroke="#d7ea18"/><polygon points="719.2,317.1 724.0,313.7 713.3,311.2 708.3,314.5" fill="#dced18" stroke="#dced18"/><polygon points="708.3,314.5 713.3,311.2 702.9,308.9 697.8,312.1" fill="#e0ef18" stroke="#e0ef18"/><polygon points="697.8,312.1 702.9,308.9 692.8,306.6 687.6,309.7" fill="#e5f118" stroke="#e5f118"/><polygon points="687.6,309.7 692.8,306.6 683.0,304.4 677.7,307.4" fill="#eaf418" stroke="#eaf418"/><polygon points="677.7,307.4 683.0,304.4 673.5,302.3 668.1,305.3" fill="#edf518" stroke="#edf518"/><polygon points="668.1,305.3 673.5,302.3 664.3,300.3 658.8,303.2" fill="#f0f718" stroke="#f0f718"/><polygon points="658.8,303.2 664.3,300.3 655.3,298.4 649.8,301.2" fill="#f2f818" stroke="#f2f818"/><polygon points="649.8,301.2 655.3,298.4 646.6,296.6 641.1,299.3" fill="#f3f818" stroke="#f3f818"/><polygon points="641.1,299.3 646.6,296.6 638.2,294.9 632.6,297.5" fill="#f3f818" stroke="#f3f818"/><polygon points="632.6,297.5 638.2,294.9 630.0,293.2 624.3,295.7" fill="#f3f818" stroke="#f3f818"/><polygon points="624.3,295.7 630.0,293.2 622.0,291.6 616.3,294.1" fill="#f2f818" stroke="#f2f818"/><polygon points="616.3,294.1 622.0,291.6 614.2,290.1 608.5,292.4" fill="#f0f718" stroke="#f0f718"/><polygon points="608.5,292.4 614.2,290.1 606.7,288.6 600.9,290.9" fill="#eef618" stroke="#eef618"/><polygon points="600.9,290.9 606.7,288.6 599.3,287.1 593.5,289.4" fill="#ebf418" stroke="#ebf418"/><polygon points="593.5,289.4 599.3,287.1 592.2,285.8 586.3,287.9" fill="#e7f218" stroke="#e7f218"/><polygon points="586.3,287.9 592.2,285.8 585.2,284.4 579.3,286.4" fill="#e2f018" stroke="#e2f018"/><polygon points="579.3,286.4 585.2,284.4 578.4,283.1 572.5,285.0" fill="#dced18" stroke="#dced18"/><polygon points="572.5,285.0 578.4,283.1 571.8,281.8 565.8,283.7" fill="#d5ea18" stroke="#d5ea18"/><polygon points="565.8,283.7 571.8,281.8 565.3,280.6 559.3,282.3" fill="#cfe618" stroke="#cfe618"/><polygon points="559.3,282.3 565.3,280.6 559.0,279.3 553.0,281.0" fill="#c7e318" stroke="#c7e318"/><polygon points="553.0,281.0 559.0,279.3 552.8,278.1 546.9,279.6" fill="#c1df18" stroke="#c1df18"/><polygon points="546.9,279.6 552.8,278.1 546.8,277.0 540.8,278.4" fill="#bbdc18" stroke="#bbdc18"/><polygon points="540.8,278.4 546.8,277.0 541.0,275.9 535.0,277.3" fill="#bbdc18" stroke="#bbdc18"/><polygon points="758.5,320.9 762.8,317.2 751.1,315.1 746.6,318.7" fill="#dbec18" stroke="#dbec18"/><polygon points="746.6,318.7 751.1,315.1 739.7,312.8 735.1,316.3" fill="#dbec18" stroke="#dbec18"/><polygon points="735.1,316.3 739.7,312.8 728.7,310.3 724.0,313.7" fill="#deee18" stroke="#deee18"/><polygon points="724.0,313.7 728.7,310.3 718.1,307.9 713.3,311.2" fill="#e2f018" stroke="#e2f018"/><polygon points="713.3,311.2 718.1,307.9 707.8,305.7 702.9,308.9" fill="#e6f218" stroke="#e6f218"/><polygon points="702.9,308.9 707.8,305.7 697.8,303.5 692.8,306.6" fill="#eaf418" stroke="#eaf418"/><polygon points="692.8,306.6 697.8,303.5 688.1,301.4 683.0,304.4" fill="#edf518" stroke="#edf518"/><polygon points="683.0,304.4 688.1,301.4 678.7,299.4 673.5,302.3" fill="#f0f718" stroke="#f0f718"/><polygon points="673.5,302.3 678.7,299.4 669.5,297.5 664.3,300.3" fill="#f3f818" stroke="#f3f818"/><polygon points="664.3,300.3 669.5,297.5 660.7,295.7 655.3,298.4" fill="#f4f918" stroke="#f4f918"/><polygon points="655.3,298.4 660.7,295.7 652.0,294.0 646.6,296.6" fill="#f5f918" stroke="#f5f918"/><polygon points="646.6,296.6 652.0,294.0 643.7,292.3 638.2,294.9" fill="#f6fa18" stroke="#f6fa18"/><polygon points="638.2,294.9 643.7,292.3 635.5,290.7 630.0,293.2" fill="#f6fa18" stroke="#f6fa18"/><polygon points="630.0,293.2 635.5,290.7 627.6,289.2 622.0,291.6" fill="#f5f918" stroke="#f5f918"/><polygon points="622.0,291.6 627.6,289.2 619.8,287.7 614.2,290.1" fill="#f4f918" stroke="#f4f918"/><polygon points="614.2,290.1 619.8,287.7 612.3,286.3 606.7,288.6" fill="#f2f818" stroke="#f2f818"/><polygon points="606.7,288.6 612.3,286.3 605.0,285.0 599.3,287.1" fill="#eff618" stroke="#eff618"/><polygon points="599.3,287.1 605.0,285.0 597.9,283.7 592.2,285.8" fill="#ebf418" stroke="#ebf418"/><polygon points="592.2,285.8 597.9,283.7 590.9,282.4 585.2,284.4" fill="#e6f218" stroke="#e6f218"/><polygon points="585.2,284.4 590.9,282.4 584.1,281.2 578.4,283.1" fill="#e0ef18" stroke="#e0ef18"/><polygon points="578.4,283.1 584.1,281.2 577.5,280.0 571.8,281.8" fill="#daec18" stroke="#daec18"/><polygon points="571.8,281.8 577.5,280.0 571.1,278.9 565.3,280.6" fill="#d3e818" stroke="#d3e818"/><polygon points="565.3,280.6 571.1,278.9 564.8,277.8 559.0,279.3" fill="#cbe518" stroke="#cbe518"/><polygon points="559.0,279.3 564.8,277.8 558.7,276.7 552.8,278.1" fill="#c4e118" stroke="#c4e118"/><polygon points="552.8,278.1 558.7,276.7 552.7,275.6 546.8,277.0" fill="#bede18" stroke="#bede18"/><polygon points="546.8,277.0 552.7,275.6 546.8,274.5 541.0,275.9" fill="#bede18" stroke="#bede18"/><polygon points="762.8,317.2 766.9,313.5 755.4,311.4 751.1,315.1" fill="#e2f018" stroke="#e2f018"/><polygon points="751.1,315.1 755.4,311.4 744.1,309.3 739.7,312.8" fill="#e2f018" stroke="#e2f018"/><polygon points="739.7,312.8 744.1,309.3 733.3,306.9 728.7,310.3" fill="#e5f118" stroke="#e5f118"/><polygon points="728.7,310.3 733.3,306.9 722.8,304.6 718.1,307.9" fill="#e8f318" stroke="#e8f318"/><polygon points="718.1,307.9 722.8,304.6 712.6,302.5 707.8,305.7" fill="#ebf418" stroke="#ebf418"/><polygon points="707.8,305.7 712.6,302.5 702.7,300.4 697.8,303.5" fill="#eef618" stroke="#eef618"/><polygon points="697.8,303.5 702.7,300.4 693.0,298.4 688.1,301.4" fill="#f1f718" stroke="#f1f718"/><polygon points="688.1,301.4 693.0,298.4 683.7,296.5 678.7,299.4" fill="#f3f818" stroke="#f3f818"/><polygon points="678.7,299.4 683.7,296.5 674.6,294.7 669.5,297.5" fill="#f5f918" stroke="#f5f918"/><polygon points="669.5,297.5 674.6,294.7 665.8,293.0 660.7,295.7" fill="#f6fa18" stroke="#f6fa18"/><polygon points="660.7,295.7 665.8,293.0 657.3,291.3 652.0,294.0" fill="#f7fa18" stroke="#f7fa18"/><polygon points="652.0,294.0 657.3,291.3 648.9,289.7 643.7,292.3" fill="#f8fb18" stroke="#f8fb18"/><polygon points="643.7,292.3 648.9,289.7 640.8,288.2 635.5,290.7" fill="#f8fb18" stroke="#f8fb18"/><polygon points="635.5,290.7 640.8,288.2 633.0,286.8 627.6,289.2" fill="#f8fb18" stroke="#f8fb18"/><polygon points="627.6,289.2 633.0,286.8 625.3,285.4 619.8,287.7" fill="#f7fa18" stroke="#f7fa18"/><polygon points="619.8,287.7 625.3,285.4 617.8,284.1 612.3,286.3" fill="#f6fa18" stroke="#f6fa18"/><polygon points="612.3,286.3 617.8,284.1 610.5,282.8 605.0,285.0" fill="#f3f818" stroke="#f3f818"/><polygon points="605.0,285.0 610.5,282.8 603.4,281.6 597.9,283.7" fill="#eff618" stroke="#eff618"/><polygon points="597.9,283.7 603.4,281.6 596.5,280.4 590.9,282.4" fill="#eaf418" stroke="#eaf418"/><polygon points="590.9,282.4 596.5,280.4 589.7,279.3 584.1,281.2" fill="#e4f118" stroke="#e4f118"/><polygon points="584.1,281.2 589.7,279.3 583.2,278.2 577.5,280.0" fill="#deee18" stroke="#deee18"/><polygon points="577.5,280.0 583.2,278.2 576.7,277.2 571.1,278.9" fill="#d6ea18" stroke="#d6ea18"/><polygon points="571.1,278.9 576.7,277.2 570.4,276.2 564.8,277.8" fill="#cfe618" stroke="#cfe618"/><polygon points="564.8,277.8 570.4,276.2 564.3,275.2 558.7,276.7" fill="#c8e318" stroke="#c8e318"/><polygon points="558.7,276.7 564.3,275.2 558.3,274.2 552.7,275.6" fill="#c2e018" stroke="#c2e018"/><polygon points="552.7,275.6 558.3,274.2 552.5,273.2 546.8,274.5" fill="#c2e018" stroke="#c2e018"/><polygon points="766.9,313.5 770.9,309.7 759.5,307.7 755.4,311.4" fill="#eaf418" stroke="#eaf418"/><polygon points="755.4,311.4 759.5,307.7 748.4,305.7 744.1,309.3" fill="#eaf418" stroke="#eaf418"/><polygon points="744.1,309.3 748.4,305.7 737.7,303.4 733.3,306.9" fill="#ecf518" stroke="#ecf518"/><polygon points="733.3,306.9 737.7,303.4 727.3,301.3 722.8,304.6" fill="#eef618" stroke="#eef618"/><polygon points="722.8,304.6 727.3,301.3 717.2,299.3 712.6,302.5" fill="#f0f718" stroke="#f0f718"/><polygon points="712.6,302.5 717.2,299.3 707.3,297.3 702.7,300.4" fill="#f2f818" stroke="#f2f818"/><polygon points="702.7,300.4 707.3,297.3 697.8,295.4 693.0,298.4" fill="#f4f918" stroke="#f4f918"/><polygon points="693.0,298.4 697.8,295.4 688.6,293.6 683.7,296.5" fill="#f6fa18" stroke="#f6fa18"/><polygon points="683.7,296.5 688.6,293.6 679.6,291.9 674.6,294.7" fill="#f7fa18" stroke="#f7fa18"/><polygon points="674.6,294.7 679.6,291.9 670.8,290.3 665.8,293.0" fill="#f8fb18" stroke="#f8fb18"/><polygon points="665.8,293.0 670.8,290.3 662.3,288.7 657.3,291.3" fill="#f9fb18" stroke="#f9fb18"/><polygon points="657.3,291.3 662.3,288.7 654.1,287.2 648.9,289.7" fill="#fafc18" stroke="#fafc18"/><polygon points="648.9,289.7 654.1,287.2 646.0,285.8 640.8,288.2" fill="#fbfc18" stroke="#fbfc18"/><polygon points="640.8,288.2 646.0,285.8 638.2,284.4 633.0,286.8" fill="#fbfc18" stroke="#fbfc18"/><polygon points="633.0,286.8 638.2,284.4 630.6,283.1 625.3,285.4" fill="#fbfc18" stroke="#fbfc18"/><polygon points="625.3,285.4 630.6,283.1 623.1,281.9 617.8,284.1" fill="#fafc18" stroke="#fafc18"/><polygon points="617.8,284.1 623.1,281.9 615.9,280.7 610.5,282.8" fill="#f7fa18" stroke="#f7fa18"/><polygon points="610.5,282.8 615.9,280.7 608.8,279.6 603.4,281.6" fill="#f4f918" stroke="#f4f918"/><polygon points="603.4,281.6 608.8,279.6 601.9,278.5 596.5,280.4" fill="#eff618" stroke="#eff618"/><polygon points="596.5,280.4 601.9,278.5 595.2,277.5 589.7,279.3" fill="#e9f318" stroke="#e9f318"/><polygon points="589.7,279.3 595.2,277.5 588.6,276.5 583.2,278.2" fill="#e2f018" stroke="#e2f018"/><polygon points="583.2,278.2 588.6,276.5 582.2,275.6 576.7,277.2" fill="#dbec18" stroke="#dbec18"/><polygon points="576.7,277.2 582.2,275.6 575.9,274.7 570.4,276.2" fill="#d3e818" stroke="#d3e818"/><polygon points="570.4,276.2 575.9,274.7 569.8,273.8 564.3,275.2" fill="#cce518" stroke="#cce518"/><polygon points="564.3,275.2 569.8,273.8 563.9,272.9 558.3,274.2" fill="#c6e218" stroke="#c6e218"/><polygon points="558.3,274.2 563.9,272.9 558.0,271.9 552.5,273.2" fill="#c6e218" stroke="#c6e218"/><polygon points="770.9,309.7 774.8,306.5 763.5,304.6 759.5,307.7" fill="#f2f818" stroke="#f2f818"/><polygon points="759.5,307.7 763.5,304.6 752.5,302.6 748.4,305.7" fill="#f2f818" stroke="#f2f818"/><polygon points="748.4,305.7 752.5,302.6 741.9,300.5 737.7,303.4" fill="#f3f818" stroke="#f3f818"/><polygon points="737.7,303.4 741.9,300.5 731.6,298.4 727.3,301.3" fill="#f5f918" stroke="#f5f918"/><polygon points="727.3,301.3 731.6,298.4 721.6,296.5 717.2,299.3" fill="#f6fa18" stroke="#f6fa18"/><polygon points="717.2,299.3 721.6,296.5 711.9,294.6 707.3,297.3" fill="#f7fa18" stroke="#f7fa18"/><polygon points="707.3,297.3 711.9,294.6 702.5,292.8 697.8,295.4" fill="#f9fb18" stroke="#f9fb18"/><polygon points="697.8,295.4 702.5,292.8 693.3,291.1 688.6,293.6" fill="#fafc18" stroke="#fafc18"/><polygon points="688.6,293.6 693.3,291.1 684.4,289.4 679.6,291.9" fill="#fbfc18" stroke="#fbfc18"/><polygon points="679.6,291.9 684.4,289.4 675.7,287.9 670.8,290.3" fill="#fbfc18" stroke="#fbfc18"/><polygon points="670.8,290.3 675.7,287.9 667.3,286.4 662.3,288.7" fill="#fcfd18" stroke="#fcfd18"/><polygon points="662.3,288.7 667.3,286.4 659.1,284.9 654.1,287.2" fill="#fdfd18" stroke="#fdfd18"/><polygon points="654.1,287.2 659.1,284.9 651.1,283.6 646.0,285.8" fill="#fefd18" stroke="#fefd18"/><polygon points="646.0,285.8 651.1,283.6 643.3,282.3 638.2,284.4" fill="#fefc18" stroke="#fefc18"/><polygon points="638.2,284.4 643.3,282.3 635.7,281.0 630.6,283.1" fill="#fefc18" stroke="#fefc18"/><polygon points="630.6,283.1 635.7,281.0 628.3,279.8 623.1,281.9" fill="#fefd18" stroke="#fefd18"/><polygon points="623.1,281.9 628.3,279.8 621.1,278.7 615.9,280.7" fill="#fcfd18" stroke="#fcfd18"/><polygon points="615.9,280.7 621.1,278.7 614.0,277.7 608.8,279.6" fill="#f9fb18" stroke="#f9fb18"/><polygon points="608.8,279.6 614.0,277.7 607.2,276.6 601.9,278.5" fill="#f4f918" stroke="#f4f918"/><polygon points="601.9,278.5 607.2,276.6 600.5,275.7 595.2,277.5" fill="#edf518" stroke="#edf518"/><polygon points="595.2,277.5 600.5,275.7 593.9,274.8 588.6,276.5" fill="#e6f218" stroke="#e6f218"/><polygon points="588.6,276.5 593.9,274.8 587.5,273.9 582.2,275.6" fill="#dfee18" stroke="#dfee18"/><polygon points="582.2,275.6 587.5,273.9 581.3,273.1 575.9,274.7" fill="#d7eb18" stroke="#d7eb18"/><polygon points="575.9,274.7 581.3,273.1 575.2,272.3 569.8,273.8" fill="#d0e718" stroke="#d0e718"/><polygon points="569.8,273.8 575.2,272.3 569.3,271.4 563.9,272.9" fill="#cae418" stroke="#cae418"/><polygon points="563.9,272.9 569.3,271.4 563.4,270.4 558.0,271.9" fill="#cae418" stroke="#cae418"/><polygon points="774.8,306.5 778.5,303.7 767.3,301.9 763.5,304.6" fill="#f2f818" stroke="#f2f818"/><polygon points="763.5,304.6 767.3,301.9 756.5,300.0 752.5,302.6" fill="#f2f818" stroke="#f2f818"/><polygon points="752.5,302.6 756.5,300.0 746.0,297.9 741.9,300.5" fill="#f3f818" stroke="#f3f818"/><polygon points="741.9,300.5 746.0,297.9 735.8,296.0 731.6,298.4" fill="#f5f918" stroke="#f5f918"/><polygon points="731.6,298.4 735.8,296.0 725.9,294.1 721.6,296.5" fill="#f6fa18" stroke="#f6fa18"/><polygon points="721.6,296.5 725.9,294.1 716.3,292.3 711.9,294.6" fill="#f7fa18" stroke="#f7fa18"/><polygon points="711.9,294.6 716.3,292.3 706.9,290.5 702.5,292.8" fill="#f9fb18" stroke="#f9fb18"/><polygon points="702.5,292.8 706.9,290.5 697.9,288.9 693.3,291.1" fill="#fafc18" stroke="#fafc18"/><polygon points="693.3,291.1 697.9,288.9 689.0,287.3 684.4,289.4" fill="#fbfc18" stroke="#fbfc18"/><polygon points="684.4,289.4 689.0,287.3 680.4,285.7 675.7,287.9" fill="#fbfc18" stroke="#fbfc18"/><polygon points="675.7,287.9 680.4,285.7 672.0,284.3 667.3,286.4" fill="#fcfd18" stroke="#fcfd18"/><polygon points="667.3,286.4 672.0,284.3 663.9,282.9 659.1,284.9" fill="#fdfd18" stroke="#fdfd18"/><polygon points="659.1,284.9 663.9,282.9 655.9,281.6 651.1,283.6" fill="#fefd18" stroke="#fefd18"/><polygon points="651.1,283.6 655.9,281.6 648.2,280.3 643.3,282.3" fill="#fefc18" stroke="#fefc18"/><polygon points="643.3,282.3 648.2,280.3 640.7,279.1 635.7,281.0" fill="#fefc18" stroke="#fefc18"/><polygon points="635.7,281.0 640.7,279.1 633.3,278.0 628.3,279.8" fill="#fefd18" stroke="#fefd18"/><polygon points="628.3,279.8 633.3,278.0 626.1,276.9 621.1,278.7" fill="#fcfd18" stroke="#fcfd18"/><polygon points="621.1,278.7 626.1,276.9 619.1,275.9 614.0,277.7" fill="#f9fb18" stroke="#f9fb18"/><polygon points="614.0,277.7 619.1,275.9 612.3,274.9 607.2,276.6" fill="#f4f918" stroke="#f4f918"/><polygon points="607.2,276.6 612.3,274.9 605.6,274.0 600.5,275.7" fill="#edf518" stroke="#edf518"/><polygon points="600.5,275.7 605.6,274.0 599.1,273.1 593.9,274.8" fill="#e6f218" stroke="#e6f218"/><polygon points="593.9,274.8 599.1,273.1 592.7,272.3 587.5,273.9" fill="#dfee18" stroke="#dfee18"/><polygon points="587.5,273.9 592.7,272.3 586.5,271.5 581.3,273.1" fill="#d7eb18" stroke="#d7eb18"/><polygon points="581.3,273.1 586.5,271.5 580.5,270.7 575.2,272.3" fill="#d0e718" stroke="#d0e718"/><polygon points="575.2,272.3 580.5,270.7 574.5,269.9 569.3,271.4" fill="#cae418" stroke="#cae418"/><polygon points="569.3,271.4 574.5,269.9 568.7,268.9 563.4,270.4" fill="#cae418" stroke="#cae418"/></g></g><path d="M371.5,176.3L403.4,443.8L597.6,570.5" fill="none" stroke="#52e052" stroke-width="1.9" stroke-linejoin="round"/><path d="M773.7,176.3L744.4,431.4L597.6,570.5" fill="none" stroke="#d92222" stroke-width="1.9" stroke-linejoin="round"/><text font-family="Liberation Sans, sans-serif" font-size="11.6" letter-spacing="0.4" fill="#333" text-anchor="middle" transform="translate(361,328.5) rotate(0)" y="4">0</text><text font-family="Liberation Sans, sans-serif" font-size="11.6" letter-spacing="0.4" fill="#333" text-anchor="middle" transform="translate(383.6,451.6) rotate(-10)" y="4">2</text><text font-family="Liberation Sans, sans-serif" font-size="11.6" letter-spacing="0.4" fill="#333" text-anchor="middle" transform="translate(384.4,457) rotate(-27)" y="4">200</text><text font-family="Liberation Sans, sans-serif" font-size="11.6" letter-spacing="0.4" fill="#333" text-anchor="middle" transform="translate(418.2,481.9) rotate(-27)" y="4">150</text><text font-family="Liberation Sans, sans-serif" font-size="11.6" letter-spacing="0.4" fill="#333" text-anchor="middle" transform="translate(459.5,513.5) rotate(-27)" y="4">100</text><text font-family="Liberation Sans, sans-serif" font-size="11.6" letter-spacing="0.4" fill="#333" text-anchor="middle" transform="translate(766.6,440.6) rotate(17)" y="4">200</text><text font-family="Liberation Sans, sans-serif" font-size="11.6" letter-spacing="0.4" fill="#333" text-anchor="middle" transform="translate(742,468.5) rotate(19)" y="4">150</text><text font-family="Liberation Sans, sans-serif" font-size="11.6" letter-spacing="0.4" fill="#333" text-anchor="middle" transform="translate(712.3,501.1) rotate(21)" y="4">100</text><text font-family="Liberation Sans, sans-serif" font-size="11.6" letter-spacing="0.4" fill="#333" text-anchor="middle" transform="translate(748.2,516.6) rotate(0)" y="4">x</text></svg><svg class="abs" style="left:700px;top:110px" width="196" height="420" viewBox="700 110 196 420"><text font-family="Liberation Sans, sans-serif" font-size="11.6" letter-spacing="0.45" fill="#3a3a3a" text-anchor="middle" x="768" y="489">Min: -0.085</text><text font-family="Liberation Sans, sans-serif" font-size="11.6" letter-spacing="0.45" fill="#3a3a3a" text-anchor="middle" x="768" y="503.4">Max: 0.19</text><text font-family="Liberation Sans, sans-serif" font-size="11.6" letter-spacing="0.45" fill="#3a3a3a" text-anchor="middle" x="768" y="517.4">Var: 0.275</text><defs><linearGradient id="cb" x1="0" y1="0" x2="0" y2="1"><stop offset="0.0000" stop-color="#f60c0c"/><stop offset="0.4000" stop-color="#f80c0c"/><stop offset="0.4500" stop-color="#fcfc0a"/><stop offset="0.5000" stop-color="#188618"/><stop offset="0.5513" stop-color="#1814fa"/><stop offset="0.6025" stop-color="#68369c"/><stop offset="1.0000" stop-color="#68369c"/></linearGradient></defs><rect x="820.1" y="126.5" width="26.7" height="385.6" fill="url(#cb)" stroke="#666" stroke-width="0.5"/><text font-family="Liberation Sans, sans-serif" font-size="11.6" letter-spacing="0.45" fill="#3a3a3a" x="850.4" y="130.5">2</text><text font-family="Liberation Sans, sans-serif" font-size="11.6" letter-spacing="0.45" fill="#3a3a3a" x="850.4" y="178.7">1.5</text><text font-family="Liberation Sans, sans-serif" font-size="11.6" letter-spacing="0.45" fill="#3a3a3a" x="850.4" y="226.9">1</text><text font-family="Liberation Sans, sans-serif" font-size="11.6" letter-spacing="0.45" fill="#3a3a3a" x="850.4" y="275.1">0.5</text><text font-family="Liberation Sans, sans-serif" font-size="11.6" letter-spacing="0.45" fill="#3a3a3a" x="850.4" y="323.3">0</text><text font-family="Liberation Sans, sans-serif" font-size="11.6" letter-spacing="0.45" fill="#3a3a3a" x="850.4" y="371.5">−0.5</text><text font-family="Liberation Sans, sans-serif" font-size="11.6" letter-spacing="0.45" fill="#3a3a3a" x="850.4" y="419.7">−1</text><text font-family="Liberation Sans, sans-serif" font-size="11.6" letter-spacing="0.45" fill="#3a3a3a" x="850.4" y="467.9">−1.5</text><text font-family="Liberation Sans, sans-serif" font-size="11.6" letter-spacing="0.45" fill="#3a3a3a" x="850.4" y="516.1">−2</text></svg>
</body>
</html>
